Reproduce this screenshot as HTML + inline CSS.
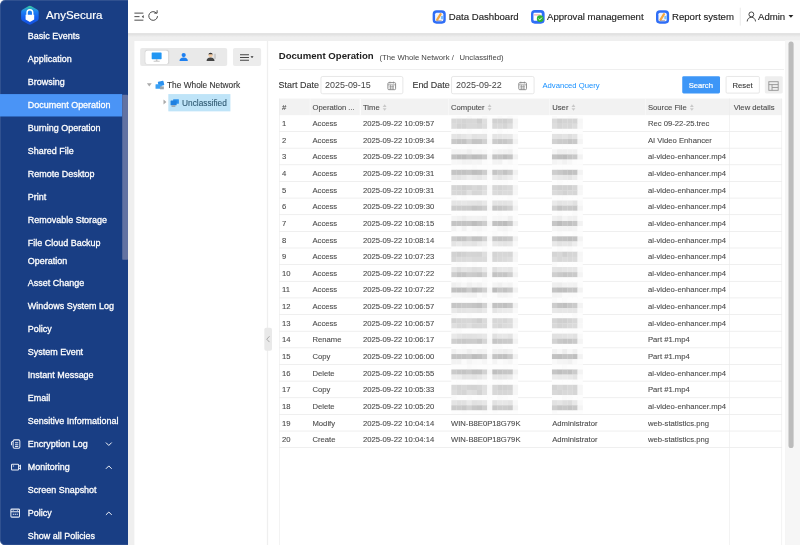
<!DOCTYPE html><html><head><meta charset="utf-8"><title>AnySecura</title><style>*{box-sizing:border-box;margin:0;padding:0}
html,body{width:800px;height:545px;overflow:hidden;background:#efefef;font-family:"Liberation Sans",sans-serif}
#app{position:absolute;left:0;top:0;width:1250px;height:852px;transform:scale(.64);transform-origin:0 0;background:linear-gradient(90deg,#fff 100px,#efefef 100px);overflow:hidden}
.side{position:absolute;left:0;top:0;width:199.6px;height:851.6px;background:#193e84;overflow:hidden;border-radius:8px 0 0 8px;box-shadow:inset 1.6px 0 0 rgba(255,255,255,.1),inset 0 1.6px 0 rgba(255,255,255,.1),inset 0 -1.6px 0 rgba(255,255,255,.1)}
.side svg{position:absolute;left:0;top:0}
.brand{-webkit-text-stroke:.3px #fff;position:absolute;left:72px;top:12px;font-size:18px;line-height:24px;color:#fff}
.mi{-webkit-text-stroke:.45px #fff;position:absolute;left:43.5px;height:36px;line-height:36px;font-size:14px;color:#fff;white-space:nowrap}
.act{position:absolute;left:0;width:191px;height:35.5px;background:#4a94f6}
.sscroll{position:absolute;left:191px;top:148.4px;width:8.5px;height:258px;background:#6272a2;border-radius:1.5px}
.top{position:absolute;left:200px;top:0;width:1050px;height:52px;background:#fff}
.top svg{position:absolute;left:0;top:0}
.tl{-webkit-text-stroke:.2px #222;position:absolute;top:14px;margin-left:-200px;font-size:15px;line-height:24px;color:#222;white-space:nowrap}
.tdiv{position:absolute;left:956px;top:12px;width:1px;height:28px;background:#ddd}
.topsh{position:absolute;left:200px;top:52px;width:1050px;height:6px;background:linear-gradient(#dcdcdc,#efefef)}
.lp{position:absolute;left:210px;top:64px;width:207px;height:800px;background:#fff}
.lp svg{position:absolute;left:0;top:0}
.seg{position:absolute;left:9px;top:11px;width:136px;height:28px;background:#e9e9e9;border-radius:3px}
.segon{position:absolute;left:7.5px;top:3.5px;width:36px;height:21px;background:#fff;border-radius:4px;box-shadow:0 0 2px rgba(0,0,0,.15)}
.seg2{position:absolute;left:154px;top:11px;width:44px;height:28px;background:#ececec;border-radius:3px}
.tsel{position:absolute;left:52.5px;top:82.8px;width:97px;height:27.2px;background:#bfe4f8}
.tn{-webkit-text-stroke:.15px #333;position:absolute;font-size:13px;line-height:24px;color:#333;white-space:nowrap}
.handle{z-index:5;position:absolute;left:413px;top:512px;width:12px;height:35.5px;background:#e9e9e9;border-radius:3px}
.handle svg{position:absolute;left:2px;top:11.7px}
.rp{position:absolute;left:419px;top:64px;width:808px;height:800px;background:#fff}
.rp svg{position:absolute;left:0;top:0}
.ttl{position:absolute;left:16.5px;top:11.3px;font-size:15px;font-weight:bold;line-height:24px;color:#222;white-space:nowrap}
.crumb{position:absolute;left:174px;top:13.5px;font-size:12px;line-height:24px;color:#444;white-space:nowrap}
.hr{position:absolute;left:17px;top:44px;width:789px;height:1px;background:#e6e6e6}
.lbl{-webkit-text-stroke:.15px #333;position:absolute;top:55.6px;font-size:14px;line-height:26px;color:#333;white-space:nowrap}
.inp{position:absolute;top:55px;width:129.5px;height:27.5px;border:1px solid #d9d9d9;border-radius:3px;background:#fff}
.inp span{position:absolute;left:6px;top:0;font-size:14px;line-height:25px;color:#444}
.adv{position:absolute;left:428.5px;top:56.5px;font-size:12px;line-height:26px;color:#1890ff;white-space:nowrap}
.btn{position:absolute;top:55.3px;height:26.5px;font-size:12px;line-height:29.4px;text-align:center;border-radius:2.2px}
.pri{left:646.5px;width:59px;background:#3d96f7;color:#fff;-webkit-text-stroke:.3px #fff}
.sec{left:715px;width:52.5px;background:#fff;border:1px solid #d9d9d9;color:#333;line-height:27.4px;-webkit-text-stroke:.15px #333}
.grid{left:776px;width:27.5px;background:#eee}
.tb{position:absolute;height:800px;font-size:12px;color:#4c4c4c;-webkit-text-stroke:.15px #4c4c4c}
.thr{position:absolute;left:0;top:0;width:100%;height:26px;background:#f2f2f2}
.th{position:absolute;top:0;height:26px;line-height:28.6px;padding-left:4.6px;white-space:nowrap}
.so{display:inline-block;position:relative;width:8px;height:12px;margin-left:4px;vertical-align:-2px}
.so:before,.so:after{content:"";position:absolute;left:.4px;border:3.6px solid transparent}
.so:before{top:-2.2px;border-bottom:4.2px solid #c8c8c8}
.so:after{top:7.2px;border-top:4.2px solid #c8c8c8}
.tr{position:absolute;left:0;width:100%;height:26px;border-bottom:1px solid #e6e6e6}
.td{position:absolute;top:0;height:26px;line-height:27.5px;padding-left:4.6px;white-space:nowrap}
.vl{position:absolute;top:0;width:1px;height:546px;background:#ececec}







.pscroll{position:absolute;left:1232px;top:65px;width:8.3px;height:634.5px;background:#bcbcbc;border-radius:4px}
.track{position:absolute;left:1227px;top:63px;width:23px;height:800px;background:#f6f6f6}
.mos{position:absolute;left:0;top:0}
.hs{position:absolute;top:0;width:1.2px;height:26px;background:#fbfbfb}
</style></head><body><div id="app">
<div class="side">
<div class="act" style="top:146.56px"></div>
<svg width="200" height="60" viewBox="0 0 200 60"><defs><linearGradient id="lg" x1="0" y1="0" x2="0" y2="1"><stop offset="0" stop-color="#38cc9c"/><stop offset=".28" stop-color="#1e84f2"/><stop offset=".6" stop-color="#1562f2"/><stop offset="1" stop-color="#1450dc"/></linearGradient></defs>
<path d="M44.3 9.8 a5 5 0 0 1 4.8 0 L58 14.8 a4.6 4.6 0 0 1 2.4 4 V29 a4.6 4.6 0 0 1 -2.4 4 L49.1 38 a5 5 0 0 1 -4.8 0 L35.4 33 a4.6 4.6 0 0 1 -2.4 -4 V18.8 a4.6 4.6 0 0 1 2.4 -4 Z" fill="url(#lg)"/>
<path d="M42.3 23.5 v-3.8 a4.4 4.4 0 0 1 8.8 0 V23.5" fill="none" stroke="#fff" stroke-width="2.3"/>
<path d="M40 23 h13.4 v7.6 l-6.7 3.8 l-6.7 -3.8 Z" fill="#fff"/></svg>

<div class="brand">AnySecura</div>
<div class="mi" style="top:38.25px">Basic Events</div>
<div class="mi" style="top:74.09px">Application</div>
<div class="mi" style="top:109.94px">Browsing</div>
<div class="mi" style="top:145.78px">Document Operation</div>
<div class="mi" style="top:181.62px">Burning Operation</div>
<div class="mi" style="top:217.47px">Shared File</div>
<div class="mi" style="top:253.31px">Remote Desktop</div>
<div class="mi" style="top:289.16px">Print</div>
<div class="mi" style="top:325.00px">Removable Storage</div>
<div class="mi" style="top:361.06px">File Cloud Backup</div>
<div class="mi" style="top:388.72px">Operation</div>
<div class="mi" style="top:423.88px">Asset Change</div>
<div class="mi" style="top:460.42px">Windows System Log</div>
<div class="mi" style="top:496.27px">Policy</div>
<div class="mi" style="top:532.11px">System Event</div>
<div class="mi" style="top:567.95px">Instant Message</div>
<div class="mi" style="top:603.80px">Email</div>
<div class="mi" style="top:639.64px">Sensitive Informational</div>
<div class="mi" style="top:675.48px">Encryption Log</div>
<div class="mi" style="top:711.33px">Monitoring</div>
<div class="mi" style="top:747.17px">Screen Snapshot</div>
<div class="mi" style="top:783.02px">Policy</div>
<div class="mi" style="top:818.86px">Show all Policies</div>
<svg width="200" height="852" viewBox="0 0 200 852" fill="none" stroke="#e8ecf5" stroke-width="1.6">
<g transform="translate(17,684.8)"><rect x="3.5" y="2.5" width="10.5" height="13" rx="2"/><path d="M3.5 5 H2.5 a1.6 1.6 0 0 0 -1.6 1.6 V11 M6.5 7 h5 M6.5 10 h5 M6.5 13 h5" /></g>
<g transform="translate(17,724)"><rect x="1" y="1.5" width="11" height="9" rx="1.2"/><path d="M12.5 4.5 l2.5 -1.5 v6 l-2.5 -1.5 M3 4 h2"/></g>
<g transform="translate(16,794)"><rect x="1" y="1.5" width="13.5" height="12.5" rx="1.5"/><path d="M1 5.5 h13.5 M4 9.5 h2 M7 9.5 h2 M10 9.5 h2 M4 3.5 h1 M10.5 3.5 h1" /></g>
<path d="M165.5 691.5 l4.5 4.5 l4.5 -4.5 M165.5 732.5 l4.5 -4.5 l4.5 4.5 M165.5 804.5 l4.5 -4.5 l4.5 4.5" stroke="#fff" stroke-width="1.5"/>
</svg>

<div class="sscroll"></div>
</div>
<div class="top">
<svg width="1050" height="52" viewBox="200 0 1050 52">
<g fill="none" stroke="#444" stroke-width="1.5"><path d="M210 20.5 h14 M210 26 h8 M210 31.5 h14"/><path d="M224.5 23.5 l-3 2.5 l3 2.5 z" fill="#444" stroke="none"/>
<path d="M244.5 20.6 a6.8 6.8 0 1 0 1.6 4.6" /><path d="M241 20.5 h4.5 v-4.5" /></g>
<g><rect x="676" y="16" width="20.5" height="21" rx="6" fill="#2f6ef6"/><rect x="679.8" y="19.8" width="12.9" height="13.4" rx="2.5" fill="#f1f4fd"/><path d="M683 31 L688.5 22" stroke="#f4a640" stroke-width="3.4" stroke-linecap="round" fill="none"/><rect x="689" y="25" width="3.4" height="5" fill="#7cc0fa"/><path d="M682 32.2 h8" stroke="#a89a9a" stroke-width="1.2"/></g>
<g><rect x="829.7" y="15.8" width="21.3" height="21.2" rx="6" fill="#2f6ef6"/><rect x="833.5" y="20" width="13" height="12.5" rx="1.5" fill="#fff"/><path d="M834.5 23.3 h10" stroke="#e88" stroke-width="1.3"/><circle cx="844" cy="29.2" r="5.2" fill="#2fb42f"/><path d="M841.3 29.2 l2 2 l3.4 -3.6" stroke="#fff" stroke-width="1.5" fill="none"/></g>
<g><rect x="1025" y="16" width="20.5" height="21" rx="6" fill="#2f6ef6"/><rect x="1028.8" y="19.8" width="12.9" height="13.4" rx="2.5" fill="#f1f4fd"/><path d="M1032 31 L1037.5 22" stroke="#f4a640" stroke-width="3.4" stroke-linecap="round" fill="none"/><rect x="1038" y="25" width="3.4" height="5" fill="#7cc0fa"/><path d="M1031 32.2 h8" stroke="#a89a9a" stroke-width="1.2"/></g>
<g fill="none" stroke="#333" stroke-width="1.4"><circle cx="1174" cy="22.5" r="3.8"/><path d="M1167.5 33.5 a6.5 6.5 0 0 1 13 0"/></g>
<path d="M1232 23.6 h7.6 l-3.8 4.3 z" fill="#222"/>
</svg>

<span class="tl" style="left:701.25px">Data Dashboard</span>
<span class="tl" style="left:854.69px">Approval management</span>
<span class="tl" style="left:1050.00px">Report system</span>
<span class="tl" style="left:1184.38px">Admin</span>
<div class="tdiv"></div>
</div><div class="topsh"></div>
<div class="lp">
<div class="seg"><div class="segon"></div></div><div class="seg2"></div>
<div class="tsel"></div>
<svg width="206" height="200" viewBox="210 64 206 200">
<g><rect x="237" y="82" width="15.5" height="10.5" rx="1" fill="#2196f3"/><rect x="243.5" y="92.5" width="2.5" height="2.5" fill="#bbb"/><rect x="240" y="95" width="9.5" height="1.3" fill="#bbb"/></g>
<g fill="#1e80f0"><circle cx="287" cy="86" r="3.3"/><path d="M280.5 95.5 a6.5 5.5 0 0 1 13 0 z"/></g>
<g><circle cx="329" cy="86.3" r="3.2" fill="#f0c8a0"/><path d="M325.6 86 a3.4 3.6 0 0 1 6.8 0 l-1 -1.2 h-4.8 z" fill="#333"/><path d="M322.8 95.5 a6.2 5.5 0 0 1 12.4 0 z" fill="#444"/><rect x="334" y="84" width="3.5" height="8" fill="#ccc"/></g>
<g stroke="#444" stroke-width="1.6"><path d="M375 85.5 h14 M375 89.7 h14 M375 94 h14"/></g><path d="M391.5 88 h4.6 l-2.3 3 z" fill="#333"/>
<path d="M229.5 130 h7.5 l-3.75 5 z" fill="#aaa"/>
<path d="M255.5 155.5 l4.5 3.8 l-4.5 3.8 z" fill="#aaa"/>
<g id="net"><rect x="247" y="127" width="9" height="7" rx=".8" fill="#2a90ee" transform="rotate(-12 251 130)"/><rect x="243" y="131.5" width="9.5" height="7" rx=".8" fill="#3aa0f4"/><rect x="250" y="135" width="6" height="4.5" fill="#9aa4ad"/></g>
<g><rect x="270.5" y="155" width="9" height="7" rx=".8" fill="#2a90ee"/><rect x="266.5" y="157" width="9.5" height="7.5" rx=".8" fill="#1e80e0"/><rect x="268" y="164.5" width="6" height="2.5" fill="#9aa4ad"/></g>
</svg>

<div class="tn" style="left:50.94px;top:56.81px">The Whole Network</div>
<div class="tn" style="left:74.38px;top:85.25px;color:#2e5871;-webkit-text-stroke-color:#2e5871">Unclassified</div>
</div>
<div class="handle"><svg width="8" height="12" viewBox="0 0 8 12"><path d="M6 1.5 L1.8 6 L6 10.5" fill="none" stroke="#999" stroke-width="1.3"/></svg></div>
<div class="rp">
<div class="ttl">Document Operation</div><div class="crumb">(The Whole Network&nbsp;/&nbsp; <span style="margin-left:2.3px">Unclassified)</span></div>
<div class="hr"></div>
<div class="lbl" style="left:16.31px">Start Date</div>
<div class="inp" style="left:81.78px"><span>2025-09-15</span></div>
<div class="lbl" style="left:225.38px">End Date</div>
<div class="inp" style="left:286.47px"><span>2025-09-22</span></div>
<div class="adv">Advanced Query</div>
<div class="btn pri">Search</div><div class="btn sec">Reset</div><div class="btn grid"></div>
<svg width="807" height="100" viewBox="419 64 807 100" fill="none" stroke="#858585" stroke-width="1.45">
<g transform="translate(605.5,127.5)"><rect x=".6" y="1.6" width="12" height="11" rx="1.5"/><path d="M.6 5 h12 M3.8 0 v3 M9.4 0 v3 M3 7.5 h7 M3 10 h7 M4.6 5 v7.6 M8.6 5 v7.6" stroke-width="1"/></g>
<g transform="translate(810,127.5)"><rect x=".6" y="1.6" width="12" height="11" rx="1.5"/><path d="M.6 5 h12 M3.8 0 v3 M9.4 0 v3 M3 7.5 h7 M3 10 h7 M4.6 5 v7.6 M8.6 5 v7.6" stroke-width="1"/></g>
<g transform="translate(1200.6,127)" stroke="#909090" stroke-width="1.35"><rect x=".7" y=".7" width="14.6" height="13.4"/><path d="M.7 5.2 h14.6 M5.7 5.2 v8.9 M5.7 9.7 h9.6"/></g>
</svg>

<div class="tb" style="left:16.94px;top:90.06px;width:785.94px">
<div class="thr">
<div class="th" style="left:0.00px;width:47.66px">#</div>
<div class="th" style="left:47.66px;width:78.91px">Operation ...</div>
<div class="th" style="left:126.56px;width:137.50px">Time<i class="so"></i></div>
<div class="th" style="left:264.06px;width:158.28px">Computer<i class="so"></i></div>
<div class="th" style="left:422.34px;width:149.53px">User<i class="so"></i></div>
<div class="th" style="left:571.88px;width:131.56px">Source File<i class="so"></i></div>
<div class="th" style="left:705.84px;width:82.50px">View details</div>
</div>
<div class="tr" style="top:26.00px">
<div class="td" style="left:0.00px;width:47.66px">1</div>
<div class="td" style="left:47.66px;width:78.91px">Access</div>
<div class="td" style="left:126.56px;width:137.50px">2025-09-22 10:09:57</div>
<div class="td" style="left:264.06px;width:158.28px"></div>
<div class="td" style="left:422.34px;width:149.53px"></div>
<div class="td" style="left:571.88px;width:131.56px">Rec 09-22-25.trec</div>
<div class="td" style="left:703.44px;width:82.50px"></div>
</div>
<div class="tr" style="top:52.00px">
<div class="td" style="left:0.00px;width:47.66px">2</div>
<div class="td" style="left:47.66px;width:78.91px">Access</div>
<div class="td" style="left:126.56px;width:137.50px">2025-09-22 10:09:34</div>
<div class="td" style="left:264.06px;width:158.28px"></div>
<div class="td" style="left:422.34px;width:149.53px"></div>
<div class="td" style="left:571.88px;width:131.56px">AI Video Enhancer</div>
<div class="td" style="left:703.44px;width:82.50px"></div>
</div>
<div class="tr" style="top:78.00px">
<div class="td" style="left:0.00px;width:47.66px">3</div>
<div class="td" style="left:47.66px;width:78.91px">Access</div>
<div class="td" style="left:126.56px;width:137.50px">2025-09-22 10:09:34</div>
<div class="td" style="left:264.06px;width:158.28px"></div>
<div class="td" style="left:422.34px;width:149.53px"></div>
<div class="td" style="left:571.88px;width:131.56px">ai-video-enhancer.mp4</div>
<div class="td" style="left:703.44px;width:82.50px"></div>
</div>
<div class="tr" style="top:104.00px">
<div class="td" style="left:0.00px;width:47.66px">4</div>
<div class="td" style="left:47.66px;width:78.91px">Access</div>
<div class="td" style="left:126.56px;width:137.50px">2025-09-22 10:09:31</div>
<div class="td" style="left:264.06px;width:158.28px"></div>
<div class="td" style="left:422.34px;width:149.53px"></div>
<div class="td" style="left:571.88px;width:131.56px">ai-video-enhancer.mp4</div>
<div class="td" style="left:703.44px;width:82.50px"></div>
</div>
<div class="tr" style="top:130.00px">
<div class="td" style="left:0.00px;width:47.66px">5</div>
<div class="td" style="left:47.66px;width:78.91px">Access</div>
<div class="td" style="left:126.56px;width:137.50px">2025-09-22 10:09:31</div>
<div class="td" style="left:264.06px;width:158.28px"></div>
<div class="td" style="left:422.34px;width:149.53px"></div>
<div class="td" style="left:571.88px;width:131.56px">ai-video-enhancer.mp4</div>
<div class="td" style="left:703.44px;width:82.50px"></div>
</div>
<div class="tr" style="top:156.00px">
<div class="td" style="left:0.00px;width:47.66px">6</div>
<div class="td" style="left:47.66px;width:78.91px">Access</div>
<div class="td" style="left:126.56px;width:137.50px">2025-09-22 10:09:30</div>
<div class="td" style="left:264.06px;width:158.28px"></div>
<div class="td" style="left:422.34px;width:149.53px"></div>
<div class="td" style="left:571.88px;width:131.56px">ai-video-enhancer.mp4</div>
<div class="td" style="left:703.44px;width:82.50px"></div>
</div>
<div class="tr" style="top:182.00px">
<div class="td" style="left:0.00px;width:47.66px">7</div>
<div class="td" style="left:47.66px;width:78.91px">Access</div>
<div class="td" style="left:126.56px;width:137.50px">2025-09-22 10:08:15</div>
<div class="td" style="left:264.06px;width:158.28px"></div>
<div class="td" style="left:422.34px;width:149.53px"></div>
<div class="td" style="left:571.88px;width:131.56px">ai-video-enhancer.mp4</div>
<div class="td" style="left:703.44px;width:82.50px"></div>
</div>
<div class="tr" style="top:208.00px">
<div class="td" style="left:0.00px;width:47.66px">8</div>
<div class="td" style="left:47.66px;width:78.91px">Access</div>
<div class="td" style="left:126.56px;width:137.50px">2025-09-22 10:08:14</div>
<div class="td" style="left:264.06px;width:158.28px"></div>
<div class="td" style="left:422.34px;width:149.53px"></div>
<div class="td" style="left:571.88px;width:131.56px">ai-video-enhancer.mp4</div>
<div class="td" style="left:703.44px;width:82.50px"></div>
</div>
<div class="tr" style="top:234.00px">
<div class="td" style="left:0.00px;width:47.66px">9</div>
<div class="td" style="left:47.66px;width:78.91px">Access</div>
<div class="td" style="left:126.56px;width:137.50px">2025-09-22 10:07:23</div>
<div class="td" style="left:264.06px;width:158.28px"></div>
<div class="td" style="left:422.34px;width:149.53px"></div>
<div class="td" style="left:571.88px;width:131.56px">ai-video-enhancer.mp4</div>
<div class="td" style="left:703.44px;width:82.50px"></div>
</div>
<div class="tr" style="top:260.00px">
<div class="td" style="left:0.00px;width:47.66px">10</div>
<div class="td" style="left:47.66px;width:78.91px">Access</div>
<div class="td" style="left:126.56px;width:137.50px">2025-09-22 10:07:22</div>
<div class="td" style="left:264.06px;width:158.28px"></div>
<div class="td" style="left:422.34px;width:149.53px"></div>
<div class="td" style="left:571.88px;width:131.56px">ai-video-enhancer.mp4</div>
<div class="td" style="left:703.44px;width:82.50px"></div>
</div>
<div class="tr" style="top:286.00px">
<div class="td" style="left:0.00px;width:47.66px">11</div>
<div class="td" style="left:47.66px;width:78.91px">Access</div>
<div class="td" style="left:126.56px;width:137.50px">2025-09-22 10:07:22</div>
<div class="td" style="left:264.06px;width:158.28px"></div>
<div class="td" style="left:422.34px;width:149.53px"></div>
<div class="td" style="left:571.88px;width:131.56px">ai-video-enhancer.mp4</div>
<div class="td" style="left:703.44px;width:82.50px"></div>
</div>
<div class="tr" style="top:312.00px">
<div class="td" style="left:0.00px;width:47.66px">12</div>
<div class="td" style="left:47.66px;width:78.91px">Access</div>
<div class="td" style="left:126.56px;width:137.50px">2025-09-22 10:06:57</div>
<div class="td" style="left:264.06px;width:158.28px"></div>
<div class="td" style="left:422.34px;width:149.53px"></div>
<div class="td" style="left:571.88px;width:131.56px">ai-video-enhancer.mp4</div>
<div class="td" style="left:703.44px;width:82.50px"></div>
</div>
<div class="tr" style="top:338.00px">
<div class="td" style="left:0.00px;width:47.66px">13</div>
<div class="td" style="left:47.66px;width:78.91px">Access</div>
<div class="td" style="left:126.56px;width:137.50px">2025-09-22 10:06:57</div>
<div class="td" style="left:264.06px;width:158.28px"></div>
<div class="td" style="left:422.34px;width:149.53px"></div>
<div class="td" style="left:571.88px;width:131.56px">ai-video-enhancer.mp4</div>
<div class="td" style="left:703.44px;width:82.50px"></div>
</div>
<div class="tr" style="top:364.00px">
<div class="td" style="left:0.00px;width:47.66px">14</div>
<div class="td" style="left:47.66px;width:78.91px">Rename</div>
<div class="td" style="left:126.56px;width:137.50px">2025-09-22 10:06:17</div>
<div class="td" style="left:264.06px;width:158.28px"></div>
<div class="td" style="left:422.34px;width:149.53px"></div>
<div class="td" style="left:571.88px;width:131.56px">Part #1.mp4</div>
<div class="td" style="left:703.44px;width:82.50px"></div>
</div>
<div class="tr" style="top:390.00px">
<div class="td" style="left:0.00px;width:47.66px">15</div>
<div class="td" style="left:47.66px;width:78.91px">Copy</div>
<div class="td" style="left:126.56px;width:137.50px">2025-09-22 10:06:00</div>
<div class="td" style="left:264.06px;width:158.28px"></div>
<div class="td" style="left:422.34px;width:149.53px"></div>
<div class="td" style="left:571.88px;width:131.56px">Part #1.mp4</div>
<div class="td" style="left:703.44px;width:82.50px"></div>
</div>
<div class="tr" style="top:416.00px">
<div class="td" style="left:0.00px;width:47.66px">16</div>
<div class="td" style="left:47.66px;width:78.91px">Delete</div>
<div class="td" style="left:126.56px;width:137.50px">2025-09-22 10:05:55</div>
<div class="td" style="left:264.06px;width:158.28px"></div>
<div class="td" style="left:422.34px;width:149.53px"></div>
<div class="td" style="left:571.88px;width:131.56px">ai-video-enhancer.mp4</div>
<div class="td" style="left:703.44px;width:82.50px"></div>
</div>
<div class="tr" style="top:442.00px">
<div class="td" style="left:0.00px;width:47.66px">17</div>
<div class="td" style="left:47.66px;width:78.91px">Copy</div>
<div class="td" style="left:126.56px;width:137.50px">2025-09-22 10:05:33</div>
<div class="td" style="left:264.06px;width:158.28px"></div>
<div class="td" style="left:422.34px;width:149.53px"></div>
<div class="td" style="left:571.88px;width:131.56px">Part #1.mp4</div>
<div class="td" style="left:703.44px;width:82.50px"></div>
</div>
<div class="tr" style="top:468.00px">
<div class="td" style="left:0.00px;width:47.66px">18</div>
<div class="td" style="left:47.66px;width:78.91px">Delete</div>
<div class="td" style="left:126.56px;width:137.50px">2025-09-22 10:05:20</div>
<div class="td" style="left:264.06px;width:158.28px"></div>
<div class="td" style="left:422.34px;width:149.53px"></div>
<div class="td" style="left:571.88px;width:131.56px">ai-video-enhancer.mp4</div>
<div class="td" style="left:703.44px;width:82.50px"></div>
</div>
<div class="tr" style="top:494.00px">
<div class="td" style="left:0.00px;width:47.66px">19</div>
<div class="td" style="left:47.66px;width:78.91px">Modify</div>
<div class="td" style="left:126.56px;width:137.50px">2025-09-22 10:04:14</div>
<div class="td" style="left:264.06px;width:158.28px">WIN-B8E0P18G79K</div>
<div class="td" style="left:422.34px;width:149.53px">Administrator</div>
<div class="td" style="left:571.88px;width:131.56px">web-statistics.png</div>
<div class="td" style="left:703.44px;width:82.50px"></div>
</div>
<div class="tr" style="top:520.00px">
<div class="td" style="left:0.00px;width:47.66px">20</div>
<div class="td" style="left:47.66px;width:78.91px">Create</div>
<div class="td" style="left:126.56px;width:137.50px">2025-09-22 10:04:14</div>
<div class="td" style="left:264.06px;width:158.28px">WIN-B8E0P18G79K</div>
<div class="td" style="left:422.34px;width:149.53px">Administrator</div>
<div class="td" style="left:571.88px;width:131.56px">web-statistics.png</div>
<div class="td" style="left:703.44px;width:82.50px"></div>
</div>
<div class="vl" style="left:0.00px;height:800px"></div>
<div class="vl" style="left:703.44px;height:800px"></div>
<div class="vl" style="left:784.94px;height:800px"></div>
<div class="hs" style="left:47.66px"></div>
<div class="hs" style="left:126.56px"></div>
<div class="hs" style="left:264.06px"></div>
<div class="hs" style="left:422.34px"></div>
<div class="hs" style="left:571.88px"></div>
<svg class="mos" width="785.9" height="546" viewBox="0 0 785.9 546"><defs><filter id="bl" x="-5%" y="-5%" width="110%" height="110%"><feGaussianBlur stdDeviation="0.7"/></filter></defs><g filter="url(#bl)"><rect x="269.22" y="27.25" width="8.30" height="4.30" fill="rgb(253,253,253)"/><rect x="277.22" y="27.25" width="8.30" height="4.30" fill="rgb(251,251,251)"/><rect x="285.22" y="27.25" width="8.30" height="4.30" fill="rgb(253,253,253)"/><rect x="293.22" y="27.25" width="8.30" height="4.30" fill="rgb(250,250,250)"/><rect x="301.22" y="27.25" width="8.30" height="4.30" fill="rgb(253,253,253)"/><rect x="309.22" y="27.25" width="8.30" height="4.30" fill="rgb(253,253,253)"/><rect x="317.22" y="27.25" width="8.30" height="4.30" fill="rgb(250,250,250)"/><rect x="325.22" y="27.25" width="8.30" height="4.30" fill="rgb(253,253,253)"/><rect x="333.22" y="27.25" width="8.30" height="4.30" fill="rgb(253,253,253)"/><rect x="341.22" y="27.25" width="8.30" height="4.30" fill="rgb(250,250,250)"/><rect x="349.22" y="27.25" width="8.30" height="4.30" fill="rgb(253,253,253)"/><rect x="357.22" y="27.25" width="8.30" height="4.30" fill="rgb(250,250,250)"/><rect x="365.22" y="27.25" width="8.30" height="4.30" fill="rgb(253,253,253)"/><rect x="426.41" y="27.25" width="8.30" height="4.30" fill="rgb(250,250,250)"/><rect x="434.41" y="27.25" width="8.30" height="4.30" fill="rgb(253,253,253)"/><rect x="442.41" y="27.25" width="8.30" height="4.30" fill="rgb(253,253,253)"/><rect x="450.41" y="27.25" width="8.30" height="4.30" fill="rgb(251,251,251)"/><rect x="458.41" y="27.25" width="8.30" height="4.30" fill="rgb(252,252,252)"/><rect x="466.41" y="27.25" width="8.30" height="4.30" fill="rgb(253,253,253)"/><rect x="269.22" y="31.25" width="8.30" height="8.30" fill="rgb(216,216,216)"/><rect x="277.22" y="31.25" width="8.30" height="8.30" fill="rgb(215,215,215)"/><rect x="285.22" y="31.25" width="8.30" height="8.30" fill="rgb(212,212,212)"/><rect x="293.22" y="31.25" width="8.30" height="8.30" fill="rgb(215,215,215)"/><rect x="301.22" y="31.25" width="8.30" height="8.30" fill="rgb(216,216,216)"/><rect x="309.22" y="31.25" width="8.30" height="8.30" fill="rgb(206,206,206)"/><rect x="317.22" y="31.25" width="8.30" height="8.30" fill="rgb(223,223,223)"/><rect x="325.22" y="31.25" width="8.30" height="8.30" fill="rgb(249,249,249)"/><rect x="333.22" y="31.25" width="8.30" height="8.30" fill="rgb(209,209,209)"/><rect x="341.22" y="31.25" width="8.30" height="8.30" fill="rgb(209,209,209)"/><rect x="349.22" y="31.25" width="8.30" height="8.30" fill="rgb(207,207,207)"/><rect x="357.22" y="31.25" width="8.30" height="8.30" fill="rgb(213,213,213)"/><rect x="365.22" y="31.25" width="8.30" height="8.30" fill="rgb(245,245,245)"/><rect x="426.41" y="31.25" width="8.30" height="8.30" fill="rgb(218,218,218)"/><rect x="434.41" y="31.25" width="8.30" height="8.30" fill="rgb(208,208,208)"/><rect x="442.41" y="31.25" width="8.30" height="8.30" fill="rgb(212,212,212)"/><rect x="450.41" y="31.25" width="8.30" height="8.30" fill="rgb(212,212,212)"/><rect x="458.41" y="31.25" width="8.30" height="8.30" fill="rgb(212,212,212)"/><rect x="466.41" y="31.25" width="8.30" height="8.30" fill="rgb(246,246,246)"/><rect x="269.22" y="39.25" width="8.30" height="8.30" fill="rgb(219,219,219)"/><rect x="277.22" y="39.25" width="8.30" height="8.30" fill="rgb(211,211,211)"/><rect x="285.22" y="39.25" width="8.30" height="8.30" fill="rgb(211,211,211)"/><rect x="293.22" y="39.25" width="8.30" height="8.30" fill="rgb(217,217,217)"/><rect x="301.22" y="39.25" width="8.30" height="8.30" fill="rgb(217,217,217)"/><rect x="309.22" y="39.25" width="8.30" height="8.30" fill="rgb(214,214,214)"/><rect x="317.22" y="39.25" width="8.30" height="8.30" fill="rgb(221,221,221)"/><rect x="325.22" y="39.25" width="8.30" height="8.30" fill="rgb(250,250,250)"/><rect x="333.22" y="39.25" width="8.30" height="8.30" fill="rgb(216,216,216)"/><rect x="341.22" y="39.25" width="8.30" height="8.30" fill="rgb(217,217,217)"/><rect x="349.22" y="39.25" width="8.30" height="8.30" fill="rgb(213,213,213)"/><rect x="357.22" y="39.25" width="8.30" height="8.30" fill="rgb(222,222,222)"/><rect x="365.22" y="39.25" width="8.30" height="8.30" fill="rgb(246,246,246)"/><rect x="426.41" y="39.25" width="8.30" height="8.30" fill="rgb(221,221,221)"/><rect x="434.41" y="39.25" width="8.30" height="8.30" fill="rgb(213,213,213)"/><rect x="442.41" y="39.25" width="8.30" height="8.30" fill="rgb(216,216,216)"/><rect x="450.41" y="39.25" width="8.30" height="8.30" fill="rgb(215,215,215)"/><rect x="458.41" y="39.25" width="8.30" height="8.30" fill="rgb(221,221,221)"/><rect x="466.41" y="39.25" width="8.30" height="8.30" fill="rgb(247,247,247)"/><rect x="269.22" y="47.25" width="8.30" height="8.30" fill="rgb(253,253,253)"/><rect x="277.22" y="47.25" width="8.30" height="8.30" fill="rgb(252,252,252)"/><rect x="285.22" y="47.25" width="8.30" height="8.30" fill="rgb(253,253,253)"/><rect x="293.22" y="47.25" width="8.30" height="8.30" fill="rgb(251,251,251)"/><rect x="301.22" y="47.25" width="8.30" height="8.30" fill="rgb(253,253,253)"/><rect x="309.22" y="47.25" width="8.30" height="8.30" fill="rgb(253,253,253)"/><rect x="317.22" y="47.25" width="8.30" height="8.30" fill="rgb(251,251,251)"/><rect x="325.22" y="47.25" width="8.30" height="8.30" fill="rgb(253,253,253)"/><rect x="333.22" y="47.25" width="8.30" height="8.30" fill="rgb(253,253,253)"/><rect x="341.22" y="47.25" width="8.30" height="8.30" fill="rgb(250,250,250)"/><rect x="349.22" y="47.25" width="8.30" height="8.30" fill="rgb(253,253,253)"/><rect x="357.22" y="47.25" width="8.30" height="8.30" fill="rgb(253,253,253)"/><rect x="365.22" y="47.25" width="8.30" height="8.30" fill="rgb(253,253,253)"/><rect x="426.41" y="47.25" width="8.30" height="8.30" fill="rgb(253,253,253)"/><rect x="434.41" y="47.25" width="8.30" height="8.30" fill="rgb(253,253,253)"/><rect x="442.41" y="47.25" width="8.30" height="8.30" fill="rgb(253,253,253)"/><rect x="450.41" y="47.25" width="8.30" height="8.30" fill="rgb(253,253,253)"/><rect x="458.41" y="47.25" width="8.30" height="8.30" fill="rgb(253,253,253)"/><rect x="466.41" y="47.25" width="8.30" height="8.30" fill="rgb(253,253,253)"/><rect x="269.22" y="55.25" width="8.30" height="8.30" fill="rgb(229,229,229)"/><rect x="277.22" y="55.25" width="8.30" height="8.30" fill="rgb(226,226,226)"/><rect x="285.22" y="55.25" width="8.30" height="8.30" fill="rgb(230,230,230)"/><rect x="293.22" y="55.25" width="8.30" height="8.30" fill="rgb(234,234,234)"/><rect x="301.22" y="55.25" width="8.30" height="8.30" fill="rgb(226,226,226)"/><rect x="309.22" y="55.25" width="8.30" height="8.30" fill="rgb(228,228,228)"/><rect x="317.22" y="55.25" width="8.30" height="8.30" fill="rgb(228,228,228)"/><rect x="325.22" y="55.25" width="8.30" height="8.30" fill="rgb(251,251,251)"/><rect x="333.22" y="55.25" width="8.30" height="8.30" fill="rgb(228,228,228)"/><rect x="341.22" y="55.25" width="8.30" height="8.30" fill="rgb(229,229,229)"/><rect x="349.22" y="55.25" width="8.30" height="8.30" fill="rgb(231,231,231)"/><rect x="357.22" y="55.25" width="8.30" height="8.30" fill="rgb(232,232,232)"/><rect x="365.22" y="55.25" width="8.30" height="8.30" fill="rgb(248,248,248)"/><rect x="426.41" y="55.25" width="8.30" height="8.30" fill="rgb(227,227,227)"/><rect x="434.41" y="55.25" width="8.30" height="8.30" fill="rgb(225,225,225)"/><rect x="442.41" y="55.25" width="8.30" height="8.30" fill="rgb(228,228,228)"/><rect x="450.41" y="55.25" width="8.30" height="8.30" fill="rgb(222,222,222)"/><rect x="458.41" y="55.25" width="8.30" height="8.30" fill="rgb(227,227,227)"/><rect x="466.41" y="55.25" width="8.30" height="8.30" fill="rgb(249,249,249)"/><rect x="269.22" y="63.25" width="8.30" height="8.30" fill="rgb(201,201,201)"/><rect x="277.22" y="63.25" width="8.30" height="8.30" fill="rgb(196,196,196)"/><rect x="285.22" y="63.25" width="8.30" height="8.30" fill="rgb(195,195,195)"/><rect x="293.22" y="63.25" width="8.30" height="8.30" fill="rgb(209,209,209)"/><rect x="301.22" y="63.25" width="8.30" height="8.30" fill="rgb(196,196,196)"/><rect x="309.22" y="63.25" width="8.30" height="8.30" fill="rgb(197,197,197)"/><rect x="317.22" y="63.25" width="8.30" height="8.30" fill="rgb(209,209,209)"/><rect x="325.22" y="63.25" width="8.30" height="8.30" fill="rgb(248,248,248)"/><rect x="333.22" y="63.25" width="8.30" height="8.30" fill="rgb(203,203,203)"/><rect x="341.22" y="63.25" width="8.30" height="8.30" fill="rgb(198,198,198)"/><rect x="349.22" y="63.25" width="8.30" height="8.30" fill="rgb(199,199,199)"/><rect x="357.22" y="63.25" width="8.30" height="8.30" fill="rgb(206,206,206)"/><rect x="365.22" y="63.25" width="8.30" height="8.30" fill="rgb(242,242,242)"/><rect x="426.41" y="63.25" width="8.30" height="8.30" fill="rgb(209,209,209)"/><rect x="434.41" y="63.25" width="8.30" height="8.30" fill="rgb(203,203,203)"/><rect x="442.41" y="63.25" width="8.30" height="8.30" fill="rgb(203,203,203)"/><rect x="450.41" y="63.25" width="8.30" height="8.30" fill="rgb(197,197,197)"/><rect x="458.41" y="63.25" width="8.30" height="8.30" fill="rgb(201,201,201)"/><rect x="466.41" y="63.25" width="8.30" height="8.30" fill="rgb(244,244,244)"/><rect x="269.22" y="71.25" width="8.30" height="8.30" fill="rgb(253,253,253)"/><rect x="277.22" y="71.25" width="8.30" height="8.30" fill="rgb(253,253,253)"/><rect x="285.22" y="71.25" width="8.30" height="8.30" fill="rgb(253,253,253)"/><rect x="293.22" y="71.25" width="8.30" height="8.30" fill="rgb(251,251,251)"/><rect x="301.22" y="71.25" width="8.30" height="8.30" fill="rgb(251,251,251)"/><rect x="309.22" y="71.25" width="8.30" height="8.30" fill="rgb(252,252,252)"/><rect x="317.22" y="71.25" width="8.30" height="8.30" fill="rgb(252,252,252)"/><rect x="325.22" y="71.25" width="8.30" height="8.30" fill="rgb(253,253,253)"/><rect x="333.22" y="71.25" width="8.30" height="8.30" fill="rgb(253,253,253)"/><rect x="341.22" y="71.25" width="8.30" height="8.30" fill="rgb(253,253,253)"/><rect x="349.22" y="71.25" width="8.30" height="8.30" fill="rgb(252,252,252)"/><rect x="357.22" y="71.25" width="8.30" height="8.30" fill="rgb(250,250,250)"/><rect x="365.22" y="71.25" width="8.30" height="8.30" fill="rgb(253,253,253)"/><rect x="426.41" y="71.25" width="8.30" height="8.30" fill="rgb(253,253,253)"/><rect x="434.41" y="71.25" width="8.30" height="8.30" fill="rgb(253,253,253)"/><rect x="442.41" y="71.25" width="8.30" height="8.30" fill="rgb(253,253,253)"/><rect x="450.41" y="71.25" width="8.30" height="8.30" fill="rgb(253,253,253)"/><rect x="458.41" y="71.25" width="8.30" height="8.30" fill="rgb(253,253,253)"/><rect x="466.41" y="71.25" width="8.30" height="8.30" fill="rgb(253,253,253)"/><rect x="269.22" y="79.25" width="8.30" height="8.30" fill="rgb(243,243,243)"/><rect x="277.22" y="79.25" width="8.30" height="8.30" fill="rgb(243,243,243)"/><rect x="285.22" y="79.25" width="8.30" height="8.30" fill="rgb(244,244,244)"/><rect x="293.22" y="79.25" width="8.30" height="8.30" fill="rgb(239,239,239)"/><rect x="301.22" y="79.25" width="8.30" height="8.30" fill="rgb(246,246,246)"/><rect x="309.22" y="79.25" width="8.30" height="8.30" fill="rgb(245,245,245)"/><rect x="317.22" y="79.25" width="8.30" height="8.30" fill="rgb(248,248,248)"/><rect x="325.22" y="79.25" width="8.30" height="8.30" fill="rgb(253,253,253)"/><rect x="333.22" y="79.25" width="8.30" height="8.30" fill="rgb(245,245,245)"/><rect x="341.22" y="79.25" width="8.30" height="8.30" fill="rgb(242,242,242)"/><rect x="349.22" y="79.25" width="8.30" height="8.30" fill="rgb(241,241,241)"/><rect x="357.22" y="79.25" width="8.30" height="8.30" fill="rgb(239,239,239)"/><rect x="365.22" y="79.25" width="8.30" height="8.30" fill="rgb(252,252,252)"/><rect x="426.41" y="79.25" width="8.30" height="8.30" fill="rgb(245,245,245)"/><rect x="434.41" y="79.25" width="8.30" height="8.30" fill="rgb(238,238,238)"/><rect x="442.41" y="79.25" width="8.30" height="8.30" fill="rgb(238,238,238)"/><rect x="450.41" y="79.25" width="8.30" height="8.30" fill="rgb(239,239,239)"/><rect x="458.41" y="79.25" width="8.30" height="8.30" fill="rgb(239,239,239)"/><rect x="466.41" y="79.25" width="8.30" height="8.30" fill="rgb(252,252,252)"/><rect x="269.22" y="87.25" width="8.30" height="8.30" fill="rgb(195,195,195)"/><rect x="277.22" y="87.25" width="8.30" height="8.30" fill="rgb(188,188,188)"/><rect x="285.22" y="87.25" width="8.30" height="8.30" fill="rgb(187,187,187)"/><rect x="293.22" y="87.25" width="8.30" height="8.30" fill="rgb(196,196,196)"/><rect x="301.22" y="87.25" width="8.30" height="8.30" fill="rgb(188,188,188)"/><rect x="309.22" y="87.25" width="8.30" height="8.30" fill="rgb(191,191,191)"/><rect x="317.22" y="87.25" width="8.30" height="8.30" fill="rgb(200,200,200)"/><rect x="325.22" y="87.25" width="8.30" height="8.30" fill="rgb(247,247,247)"/><rect x="333.22" y="87.25" width="8.30" height="8.30" fill="rgb(196,196,196)"/><rect x="341.22" y="87.25" width="8.30" height="8.30" fill="rgb(196,196,196)"/><rect x="349.22" y="87.25" width="8.30" height="8.30" fill="rgb(189,189,189)"/><rect x="357.22" y="87.25" width="8.30" height="8.30" fill="rgb(196,196,196)"/><rect x="365.22" y="87.25" width="8.30" height="8.30" fill="rgb(241,241,241)"/><rect x="426.41" y="87.25" width="8.30" height="8.30" fill="rgb(197,197,197)"/><rect x="434.41" y="87.25" width="8.30" height="8.30" fill="rgb(191,191,191)"/><rect x="442.41" y="87.25" width="8.30" height="8.30" fill="rgb(188,188,188)"/><rect x="450.41" y="87.25" width="8.30" height="8.30" fill="rgb(196,196,196)"/><rect x="458.41" y="87.25" width="8.30" height="8.30" fill="rgb(200,200,200)"/><rect x="466.41" y="87.25" width="8.30" height="8.30" fill="rgb(242,242,242)"/><rect x="269.22" y="95.25" width="8.30" height="8.30" fill="rgb(247,247,247)"/><rect x="277.22" y="95.25" width="8.30" height="8.30" fill="rgb(246,246,246)"/><rect x="285.22" y="95.25" width="8.30" height="8.30" fill="rgb(242,242,242)"/><rect x="293.22" y="95.25" width="8.30" height="8.30" fill="rgb(243,243,243)"/><rect x="301.22" y="95.25" width="8.30" height="8.30" fill="rgb(245,245,245)"/><rect x="309.22" y="95.25" width="8.30" height="8.30" fill="rgb(244,244,244)"/><rect x="317.22" y="95.25" width="8.30" height="8.30" fill="rgb(251,251,251)"/><rect x="325.22" y="95.25" width="8.30" height="8.30" fill="rgb(253,253,253)"/><rect x="333.22" y="95.25" width="8.30" height="8.30" fill="rgb(243,243,243)"/><rect x="341.22" y="95.25" width="8.30" height="8.30" fill="rgb(242,242,242)"/><rect x="349.22" y="95.25" width="8.30" height="8.30" fill="rgb(251,251,251)"/><rect x="357.22" y="95.25" width="8.30" height="8.30" fill="rgb(248,248,248)"/><rect x="365.22" y="95.25" width="8.30" height="8.30" fill="rgb(253,253,253)"/><rect x="426.41" y="95.25" width="8.30" height="8.30" fill="rgb(244,244,244)"/><rect x="434.41" y="95.25" width="8.30" height="8.30" fill="rgb(247,247,247)"/><rect x="442.41" y="95.25" width="8.30" height="8.30" fill="rgb(242,242,242)"/><rect x="450.41" y="95.25" width="8.30" height="8.30" fill="rgb(247,247,247)"/><rect x="458.41" y="95.25" width="8.30" height="8.30" fill="rgb(252,252,252)"/><rect x="466.41" y="95.25" width="8.30" height="8.30" fill="rgb(253,253,253)"/><rect x="269.22" y="103.25" width="8.30" height="8.30" fill="rgb(253,253,253)"/><rect x="277.22" y="103.25" width="8.30" height="8.30" fill="rgb(253,253,253)"/><rect x="285.22" y="103.25" width="8.30" height="8.30" fill="rgb(252,252,252)"/><rect x="293.22" y="103.25" width="8.30" height="8.30" fill="rgb(253,253,253)"/><rect x="301.22" y="103.25" width="8.30" height="8.30" fill="rgb(251,251,251)"/><rect x="309.22" y="103.25" width="8.30" height="8.30" fill="rgb(253,253,253)"/><rect x="317.22" y="103.25" width="8.30" height="8.30" fill="rgb(253,253,253)"/><rect x="325.22" y="103.25" width="8.30" height="8.30" fill="rgb(253,253,253)"/><rect x="333.22" y="103.25" width="8.30" height="8.30" fill="rgb(253,253,253)"/><rect x="341.22" y="103.25" width="8.30" height="8.30" fill="rgb(253,253,253)"/><rect x="349.22" y="103.25" width="8.30" height="8.30" fill="rgb(252,252,252)"/><rect x="357.22" y="103.25" width="8.30" height="8.30" fill="rgb(253,253,253)"/><rect x="365.22" y="103.25" width="8.30" height="8.30" fill="rgb(253,253,253)"/><rect x="426.41" y="103.25" width="8.30" height="8.30" fill="rgb(253,253,253)"/><rect x="434.41" y="103.25" width="8.30" height="8.30" fill="rgb(253,253,253)"/><rect x="442.41" y="103.25" width="8.30" height="8.30" fill="rgb(253,253,253)"/><rect x="450.41" y="103.25" width="8.30" height="8.30" fill="rgb(253,253,253)"/><rect x="458.41" y="103.25" width="8.30" height="8.30" fill="rgb(253,253,253)"/><rect x="466.41" y="103.25" width="8.30" height="8.30" fill="rgb(253,253,253)"/><rect x="269.22" y="111.25" width="8.30" height="8.30" fill="rgb(197,197,197)"/><rect x="277.22" y="111.25" width="8.30" height="8.30" fill="rgb(195,195,195)"/><rect x="285.22" y="111.25" width="8.30" height="8.30" fill="rgb(194,194,194)"/><rect x="293.22" y="111.25" width="8.30" height="8.30" fill="rgb(198,198,198)"/><rect x="301.22" y="111.25" width="8.30" height="8.30" fill="rgb(190,190,190)"/><rect x="309.22" y="111.25" width="8.30" height="8.30" fill="rgb(193,193,193)"/><rect x="317.22" y="111.25" width="8.30" height="8.30" fill="rgb(205,205,205)"/><rect x="325.22" y="111.25" width="8.30" height="8.30" fill="rgb(247,247,247)"/><rect x="333.22" y="111.25" width="8.30" height="8.30" fill="rgb(197,197,197)"/><rect x="341.22" y="111.25" width="8.30" height="8.30" fill="rgb(203,203,203)"/><rect x="349.22" y="111.25" width="8.30" height="8.30" fill="rgb(195,195,195)"/><rect x="357.22" y="111.25" width="8.30" height="8.30" fill="rgb(205,205,205)"/><rect x="365.22" y="111.25" width="8.30" height="8.30" fill="rgb(241,241,241)"/><rect x="426.41" y="111.25" width="8.30" height="8.30" fill="rgb(206,206,206)"/><rect x="434.41" y="111.25" width="8.30" height="8.30" fill="rgb(200,200,200)"/><rect x="442.41" y="111.25" width="8.30" height="8.30" fill="rgb(194,194,194)"/><rect x="450.41" y="111.25" width="8.30" height="8.30" fill="rgb(192,192,192)"/><rect x="458.41" y="111.25" width="8.30" height="8.30" fill="rgb(195,195,195)"/><rect x="466.41" y="111.25" width="8.30" height="8.30" fill="rgb(243,243,243)"/><rect x="269.22" y="119.25" width="8.30" height="8.30" fill="rgb(230,230,230)"/><rect x="277.22" y="119.25" width="8.30" height="8.30" fill="rgb(228,228,228)"/><rect x="285.22" y="119.25" width="8.30" height="8.30" fill="rgb(232,232,232)"/><rect x="293.22" y="119.25" width="8.30" height="8.30" fill="rgb(238,238,238)"/><rect x="301.22" y="119.25" width="8.30" height="8.30" fill="rgb(234,234,234)"/><rect x="309.22" y="119.25" width="8.30" height="8.30" fill="rgb(231,231,231)"/><rect x="317.22" y="119.25" width="8.30" height="8.30" fill="rgb(237,237,237)"/><rect x="325.22" y="119.25" width="8.30" height="8.30" fill="rgb(252,252,252)"/><rect x="333.22" y="119.25" width="8.30" height="8.30" fill="rgb(234,234,234)"/><rect x="341.22" y="119.25" width="8.30" height="8.30" fill="rgb(228,228,228)"/><rect x="349.22" y="119.25" width="8.30" height="8.30" fill="rgb(232,232,232)"/><rect x="357.22" y="119.25" width="8.30" height="8.30" fill="rgb(237,237,237)"/><rect x="365.22" y="119.25" width="8.30" height="8.30" fill="rgb(249,249,249)"/><rect x="426.41" y="119.25" width="8.30" height="8.30" fill="rgb(236,236,236)"/><rect x="434.41" y="119.25" width="8.30" height="8.30" fill="rgb(233,233,233)"/><rect x="442.41" y="119.25" width="8.30" height="8.30" fill="rgb(231,231,231)"/><rect x="450.41" y="119.25" width="8.30" height="8.30" fill="rgb(228,228,228)"/><rect x="458.41" y="119.25" width="8.30" height="8.30" fill="rgb(235,235,235)"/><rect x="466.41" y="119.25" width="8.30" height="8.30" fill="rgb(250,250,250)"/><rect x="269.22" y="127.25" width="8.30" height="8.30" fill="rgb(253,253,253)"/><rect x="277.22" y="127.25" width="8.30" height="8.30" fill="rgb(253,253,253)"/><rect x="285.22" y="127.25" width="8.30" height="8.30" fill="rgb(253,253,253)"/><rect x="293.22" y="127.25" width="8.30" height="8.30" fill="rgb(253,253,253)"/><rect x="301.22" y="127.25" width="8.30" height="8.30" fill="rgb(253,253,253)"/><rect x="309.22" y="127.25" width="8.30" height="8.30" fill="rgb(253,253,253)"/><rect x="317.22" y="127.25" width="8.30" height="8.30" fill="rgb(253,253,253)"/><rect x="325.22" y="127.25" width="8.30" height="8.30" fill="rgb(253,253,253)"/><rect x="333.22" y="127.25" width="8.30" height="8.30" fill="rgb(251,251,251)"/><rect x="341.22" y="127.25" width="8.30" height="8.30" fill="rgb(251,251,251)"/><rect x="349.22" y="127.25" width="8.30" height="8.30" fill="rgb(251,251,251)"/><rect x="357.22" y="127.25" width="8.30" height="8.30" fill="rgb(253,253,253)"/><rect x="365.22" y="127.25" width="8.30" height="8.30" fill="rgb(253,253,253)"/><rect x="426.41" y="127.25" width="8.30" height="8.30" fill="rgb(253,253,253)"/><rect x="434.41" y="127.25" width="8.30" height="8.30" fill="rgb(251,251,251)"/><rect x="442.41" y="127.25" width="8.30" height="8.30" fill="rgb(253,253,253)"/><rect x="450.41" y="127.25" width="8.30" height="8.30" fill="rgb(253,253,253)"/><rect x="458.41" y="127.25" width="8.30" height="8.30" fill="rgb(253,253,253)"/><rect x="466.41" y="127.25" width="8.30" height="8.30" fill="rgb(253,253,253)"/><rect x="269.22" y="135.25" width="8.30" height="8.30" fill="rgb(213,213,213)"/><rect x="277.22" y="135.25" width="8.30" height="8.30" fill="rgb(211,211,211)"/><rect x="285.22" y="135.25" width="8.30" height="8.30" fill="rgb(207,207,207)"/><rect x="293.22" y="135.25" width="8.30" height="8.30" fill="rgb(211,211,211)"/><rect x="301.22" y="135.25" width="8.30" height="8.30" fill="rgb(216,216,216)"/><rect x="309.22" y="135.25" width="8.30" height="8.30" fill="rgb(212,212,212)"/><rect x="317.22" y="135.25" width="8.30" height="8.30" fill="rgb(220,220,220)"/><rect x="325.22" y="135.25" width="8.30" height="8.30" fill="rgb(249,249,249)"/><rect x="333.22" y="135.25" width="8.30" height="8.30" fill="rgb(215,215,215)"/><rect x="341.22" y="135.25" width="8.30" height="8.30" fill="rgb(212,212,212)"/><rect x="349.22" y="135.25" width="8.30" height="8.30" fill="rgb(215,215,215)"/><rect x="357.22" y="135.25" width="8.30" height="8.30" fill="rgb(218,218,218)"/><rect x="365.22" y="135.25" width="8.30" height="8.30" fill="rgb(245,245,245)"/><rect x="426.41" y="135.25" width="8.30" height="8.30" fill="rgb(212,212,212)"/><rect x="434.41" y="135.25" width="8.30" height="8.30" fill="rgb(208,208,208)"/><rect x="442.41" y="135.25" width="8.30" height="8.30" fill="rgb(209,209,209)"/><rect x="450.41" y="135.25" width="8.30" height="8.30" fill="rgb(208,208,208)"/><rect x="458.41" y="135.25" width="8.30" height="8.30" fill="rgb(214,214,214)"/><rect x="466.41" y="135.25" width="8.30" height="8.30" fill="rgb(246,246,246)"/><rect x="269.22" y="143.25" width="8.30" height="8.30" fill="rgb(216,216,216)"/><rect x="277.22" y="143.25" width="8.30" height="8.30" fill="rgb(214,214,214)"/><rect x="285.22" y="143.25" width="8.30" height="8.30" fill="rgb(212,212,212)"/><rect x="293.22" y="143.25" width="8.30" height="8.30" fill="rgb(224,224,224)"/><rect x="301.22" y="143.25" width="8.30" height="8.30" fill="rgb(214,214,214)"/><rect x="309.22" y="143.25" width="8.30" height="8.30" fill="rgb(215,215,215)"/><rect x="317.22" y="143.25" width="8.30" height="8.30" fill="rgb(224,224,224)"/><rect x="325.22" y="143.25" width="8.30" height="8.30" fill="rgb(250,250,250)"/><rect x="333.22" y="143.25" width="8.30" height="8.30" fill="rgb(219,219,219)"/><rect x="341.22" y="143.25" width="8.30" height="8.30" fill="rgb(216,216,216)"/><rect x="349.22" y="143.25" width="8.30" height="8.30" fill="rgb(219,219,219)"/><rect x="357.22" y="143.25" width="8.30" height="8.30" fill="rgb(219,219,219)"/><rect x="365.22" y="143.25" width="8.30" height="8.30" fill="rgb(246,246,246)"/><rect x="426.41" y="143.25" width="8.30" height="8.30" fill="rgb(219,219,219)"/><rect x="434.41" y="143.25" width="8.30" height="8.30" fill="rgb(215,215,215)"/><rect x="442.41" y="143.25" width="8.30" height="8.30" fill="rgb(210,210,210)"/><rect x="450.41" y="143.25" width="8.30" height="8.30" fill="rgb(215,215,215)"/><rect x="458.41" y="143.25" width="8.30" height="8.30" fill="rgb(214,214,214)"/><rect x="466.41" y="143.25" width="8.30" height="8.30" fill="rgb(247,247,247)"/><rect x="269.22" y="151.25" width="8.30" height="8.30" fill="rgb(250,250,250)"/><rect x="277.22" y="151.25" width="8.30" height="8.30" fill="rgb(253,253,253)"/><rect x="285.22" y="151.25" width="8.30" height="8.30" fill="rgb(251,251,251)"/><rect x="293.22" y="151.25" width="8.30" height="8.30" fill="rgb(253,253,253)"/><rect x="301.22" y="151.25" width="8.30" height="8.30" fill="rgb(253,253,253)"/><rect x="309.22" y="151.25" width="8.30" height="8.30" fill="rgb(253,253,253)"/><rect x="317.22" y="151.25" width="8.30" height="8.30" fill="rgb(253,253,253)"/><rect x="325.22" y="151.25" width="8.30" height="8.30" fill="rgb(253,253,253)"/><rect x="333.22" y="151.25" width="8.30" height="8.30" fill="rgb(253,253,253)"/><rect x="341.22" y="151.25" width="8.30" height="8.30" fill="rgb(253,253,253)"/><rect x="349.22" y="151.25" width="8.30" height="8.30" fill="rgb(253,253,253)"/><rect x="357.22" y="151.25" width="8.30" height="8.30" fill="rgb(251,251,251)"/><rect x="365.22" y="151.25" width="8.30" height="8.30" fill="rgb(253,253,253)"/><rect x="426.41" y="151.25" width="8.30" height="8.30" fill="rgb(253,253,253)"/><rect x="434.41" y="151.25" width="8.30" height="8.30" fill="rgb(252,252,252)"/><rect x="442.41" y="151.25" width="8.30" height="8.30" fill="rgb(252,252,252)"/><rect x="450.41" y="151.25" width="8.30" height="8.30" fill="rgb(253,253,253)"/><rect x="458.41" y="151.25" width="8.30" height="8.30" fill="rgb(253,253,253)"/><rect x="466.41" y="151.25" width="8.30" height="8.30" fill="rgb(253,253,253)"/><rect x="269.22" y="159.25" width="8.30" height="8.30" fill="rgb(229,229,229)"/><rect x="277.22" y="159.25" width="8.30" height="8.30" fill="rgb(229,229,229)"/><rect x="285.22" y="159.25" width="8.30" height="8.30" fill="rgb(231,231,231)"/><rect x="293.22" y="159.25" width="8.30" height="8.30" fill="rgb(229,229,229)"/><rect x="301.22" y="159.25" width="8.30" height="8.30" fill="rgb(228,228,228)"/><rect x="309.22" y="159.25" width="8.30" height="8.30" fill="rgb(226,226,226)"/><rect x="317.22" y="159.25" width="8.30" height="8.30" fill="rgb(232,232,232)"/><rect x="325.22" y="159.25" width="8.30" height="8.30" fill="rgb(251,251,251)"/><rect x="333.22" y="159.25" width="8.30" height="8.30" fill="rgb(228,228,228)"/><rect x="341.22" y="159.25" width="8.30" height="8.30" fill="rgb(227,227,227)"/><rect x="349.22" y="159.25" width="8.30" height="8.30" fill="rgb(227,227,227)"/><rect x="357.22" y="159.25" width="8.30" height="8.30" fill="rgb(229,229,229)"/><rect x="365.22" y="159.25" width="8.30" height="8.30" fill="rgb(248,248,248)"/><rect x="426.41" y="159.25" width="8.30" height="8.30" fill="rgb(234,234,234)"/><rect x="434.41" y="159.25" width="8.30" height="8.30" fill="rgb(228,228,228)"/><rect x="442.41" y="159.25" width="8.30" height="8.30" fill="rgb(230,230,230)"/><rect x="450.41" y="159.25" width="8.30" height="8.30" fill="rgb(231,231,231)"/><rect x="458.41" y="159.25" width="8.30" height="8.30" fill="rgb(225,225,225)"/><rect x="466.41" y="159.25" width="8.30" height="8.30" fill="rgb(249,249,249)"/><rect x="269.22" y="167.25" width="8.30" height="8.30" fill="rgb(205,205,205)"/><rect x="277.22" y="167.25" width="8.30" height="8.30" fill="rgb(204,204,204)"/><rect x="285.22" y="167.25" width="8.30" height="8.30" fill="rgb(203,203,203)"/><rect x="293.22" y="167.25" width="8.30" height="8.30" fill="rgb(203,203,203)"/><rect x="301.22" y="167.25" width="8.30" height="8.30" fill="rgb(196,196,196)"/><rect x="309.22" y="167.25" width="8.30" height="8.30" fill="rgb(199,199,199)"/><rect x="317.22" y="167.25" width="8.30" height="8.30" fill="rgb(206,206,206)"/><rect x="325.22" y="167.25" width="8.30" height="8.30" fill="rgb(248,248,248)"/><rect x="333.22" y="167.25" width="8.30" height="8.30" fill="rgb(197,197,197)"/><rect x="341.22" y="167.25" width="8.30" height="8.30" fill="rgb(198,198,198)"/><rect x="349.22" y="167.25" width="8.30" height="8.30" fill="rgb(201,201,201)"/><rect x="357.22" y="167.25" width="8.30" height="8.30" fill="rgb(208,208,208)"/><rect x="365.22" y="167.25" width="8.30" height="8.30" fill="rgb(242,242,242)"/><rect x="426.41" y="167.25" width="8.30" height="8.30" fill="rgb(209,209,209)"/><rect x="434.41" y="167.25" width="8.30" height="8.30" fill="rgb(196,196,196)"/><rect x="442.41" y="167.25" width="8.30" height="8.30" fill="rgb(202,202,202)"/><rect x="450.41" y="167.25" width="8.30" height="8.30" fill="rgb(201,201,201)"/><rect x="458.41" y="167.25" width="8.30" height="8.30" fill="rgb(199,199,199)"/><rect x="466.41" y="167.25" width="8.30" height="8.30" fill="rgb(244,244,244)"/><rect x="269.22" y="175.25" width="8.30" height="8.30" fill="rgb(253,253,253)"/><rect x="277.22" y="175.25" width="8.30" height="8.30" fill="rgb(253,253,253)"/><rect x="285.22" y="175.25" width="8.30" height="8.30" fill="rgb(252,252,252)"/><rect x="293.22" y="175.25" width="8.30" height="8.30" fill="rgb(253,253,253)"/><rect x="301.22" y="175.25" width="8.30" height="8.30" fill="rgb(253,253,253)"/><rect x="309.22" y="175.25" width="8.30" height="8.30" fill="rgb(253,253,253)"/><rect x="317.22" y="175.25" width="8.30" height="8.30" fill="rgb(253,253,253)"/><rect x="325.22" y="175.25" width="8.30" height="8.30" fill="rgb(253,253,253)"/><rect x="333.22" y="175.25" width="8.30" height="8.30" fill="rgb(253,253,253)"/><rect x="341.22" y="175.25" width="8.30" height="8.30" fill="rgb(251,251,251)"/><rect x="349.22" y="175.25" width="8.30" height="8.30" fill="rgb(253,253,253)"/><rect x="357.22" y="175.25" width="8.30" height="8.30" fill="rgb(253,253,253)"/><rect x="365.22" y="175.25" width="8.30" height="8.30" fill="rgb(253,253,253)"/><rect x="426.41" y="175.25" width="8.30" height="8.30" fill="rgb(253,253,253)"/><rect x="434.41" y="175.25" width="8.30" height="8.30" fill="rgb(251,251,251)"/><rect x="442.41" y="175.25" width="8.30" height="8.30" fill="rgb(253,253,253)"/><rect x="450.41" y="175.25" width="8.30" height="8.30" fill="rgb(253,253,253)"/><rect x="458.41" y="175.25" width="8.30" height="8.30" fill="rgb(250,250,250)"/><rect x="466.41" y="175.25" width="8.30" height="8.30" fill="rgb(253,253,253)"/><rect x="269.22" y="183.25" width="8.30" height="8.30" fill="rgb(244,244,244)"/><rect x="277.22" y="183.25" width="8.30" height="8.30" fill="rgb(241,241,241)"/><rect x="285.22" y="183.25" width="8.30" height="8.30" fill="rgb(237,237,237)"/><rect x="293.22" y="183.25" width="8.30" height="8.30" fill="rgb(242,242,242)"/><rect x="301.22" y="183.25" width="8.30" height="8.30" fill="rgb(243,243,243)"/><rect x="309.22" y="183.25" width="8.30" height="8.30" fill="rgb(242,242,242)"/><rect x="317.22" y="183.25" width="8.30" height="8.30" fill="rgb(240,240,240)"/><rect x="325.22" y="183.25" width="8.30" height="8.30" fill="rgb(253,253,253)"/><rect x="333.22" y="183.25" width="8.30" height="8.30" fill="rgb(247,247,247)"/><rect x="341.22" y="183.25" width="8.30" height="8.30" fill="rgb(246,246,246)"/><rect x="349.22" y="183.25" width="8.30" height="8.30" fill="rgb(247,247,247)"/><rect x="357.22" y="183.25" width="8.30" height="8.30" fill="rgb(239,239,239)"/><rect x="365.22" y="183.25" width="8.30" height="8.30" fill="rgb(252,252,252)"/><rect x="426.41" y="183.25" width="8.30" height="8.30" fill="rgb(241,241,241)"/><rect x="434.41" y="183.25" width="8.30" height="8.30" fill="rgb(237,237,237)"/><rect x="442.41" y="183.25" width="8.30" height="8.30" fill="rgb(245,245,245)"/><rect x="450.41" y="183.25" width="8.30" height="8.30" fill="rgb(240,240,240)"/><rect x="458.41" y="183.25" width="8.30" height="8.30" fill="rgb(239,239,239)"/><rect x="466.41" y="183.25" width="8.30" height="8.30" fill="rgb(252,252,252)"/><rect x="269.22" y="191.25" width="8.30" height="8.30" fill="rgb(196,196,196)"/><rect x="277.22" y="191.25" width="8.30" height="8.30" fill="rgb(196,196,196)"/><rect x="285.22" y="191.25" width="8.30" height="8.30" fill="rgb(195,195,195)"/><rect x="293.22" y="191.25" width="8.30" height="8.30" fill="rgb(197,197,197)"/><rect x="301.22" y="191.25" width="8.30" height="8.30" fill="rgb(189,189,189)"/><rect x="309.22" y="191.25" width="8.30" height="8.30" fill="rgb(196,196,196)"/><rect x="317.22" y="191.25" width="8.30" height="8.30" fill="rgb(205,205,205)"/><rect x="325.22" y="191.25" width="8.30" height="8.30" fill="rgb(247,247,247)"/><rect x="333.22" y="191.25" width="8.30" height="8.30" fill="rgb(194,194,194)"/><rect x="341.22" y="191.25" width="8.30" height="8.30" fill="rgb(191,191,191)"/><rect x="349.22" y="191.25" width="8.30" height="8.30" fill="rgb(188,188,188)"/><rect x="357.22" y="191.25" width="8.30" height="8.30" fill="rgb(200,200,200)"/><rect x="365.22" y="191.25" width="8.30" height="8.30" fill="rgb(241,241,241)"/><rect x="426.41" y="191.25" width="8.30" height="8.30" fill="rgb(198,198,198)"/><rect x="434.41" y="191.25" width="8.30" height="8.30" fill="rgb(188,188,188)"/><rect x="442.41" y="191.25" width="8.30" height="8.30" fill="rgb(196,196,196)"/><rect x="450.41" y="191.25" width="8.30" height="8.30" fill="rgb(193,193,193)"/><rect x="458.41" y="191.25" width="8.30" height="8.30" fill="rgb(198,198,198)"/><rect x="466.41" y="191.25" width="8.30" height="8.30" fill="rgb(242,242,242)"/><rect x="269.22" y="199.25" width="8.30" height="8.30" fill="rgb(243,243,243)"/><rect x="277.22" y="199.25" width="8.30" height="8.30" fill="rgb(250,250,250)"/><rect x="285.22" y="199.25" width="8.30" height="8.30" fill="rgb(242,242,242)"/><rect x="293.22" y="199.25" width="8.30" height="8.30" fill="rgb(251,251,251)"/><rect x="301.22" y="199.25" width="8.30" height="8.30" fill="rgb(246,246,246)"/><rect x="309.22" y="199.25" width="8.30" height="8.30" fill="rgb(245,245,245)"/><rect x="317.22" y="199.25" width="8.30" height="8.30" fill="rgb(249,249,249)"/><rect x="325.22" y="199.25" width="8.30" height="8.30" fill="rgb(253,253,253)"/><rect x="333.22" y="199.25" width="8.30" height="8.30" fill="rgb(251,251,251)"/><rect x="341.22" y="199.25" width="8.30" height="8.30" fill="rgb(245,245,245)"/><rect x="349.22" y="199.25" width="8.30" height="8.30" fill="rgb(243,243,243)"/><rect x="357.22" y="199.25" width="8.30" height="8.30" fill="rgb(248,248,248)"/><rect x="365.22" y="199.25" width="8.30" height="8.30" fill="rgb(253,253,253)"/><rect x="426.41" y="199.25" width="8.30" height="8.30" fill="rgb(245,245,245)"/><rect x="434.41" y="199.25" width="8.30" height="8.30" fill="rgb(243,243,243)"/><rect x="442.41" y="199.25" width="8.30" height="8.30" fill="rgb(243,243,243)"/><rect x="450.41" y="199.25" width="8.30" height="8.30" fill="rgb(242,242,242)"/><rect x="458.41" y="199.25" width="8.30" height="8.30" fill="rgb(244,244,244)"/><rect x="466.41" y="199.25" width="8.30" height="8.30" fill="rgb(253,253,253)"/><rect x="269.22" y="207.25" width="8.30" height="8.30" fill="rgb(253,253,253)"/><rect x="277.22" y="207.25" width="8.30" height="8.30" fill="rgb(253,253,253)"/><rect x="285.22" y="207.25" width="8.30" height="8.30" fill="rgb(253,253,253)"/><rect x="293.22" y="207.25" width="8.30" height="8.30" fill="rgb(252,252,252)"/><rect x="301.22" y="207.25" width="8.30" height="8.30" fill="rgb(253,253,253)"/><rect x="309.22" y="207.25" width="8.30" height="8.30" fill="rgb(251,251,251)"/><rect x="317.22" y="207.25" width="8.30" height="8.30" fill="rgb(253,253,253)"/><rect x="325.22" y="207.25" width="8.30" height="8.30" fill="rgb(253,253,253)"/><rect x="333.22" y="207.25" width="8.30" height="8.30" fill="rgb(250,250,250)"/><rect x="341.22" y="207.25" width="8.30" height="8.30" fill="rgb(252,252,252)"/><rect x="349.22" y="207.25" width="8.30" height="8.30" fill="rgb(250,250,250)"/><rect x="357.22" y="207.25" width="8.30" height="8.30" fill="rgb(253,253,253)"/><rect x="365.22" y="207.25" width="8.30" height="8.30" fill="rgb(253,253,253)"/><rect x="426.41" y="207.25" width="8.30" height="8.30" fill="rgb(253,253,253)"/><rect x="434.41" y="207.25" width="8.30" height="8.30" fill="rgb(251,251,251)"/><rect x="442.41" y="207.25" width="8.30" height="8.30" fill="rgb(253,253,253)"/><rect x="450.41" y="207.25" width="8.30" height="8.30" fill="rgb(253,253,253)"/><rect x="458.41" y="207.25" width="8.30" height="8.30" fill="rgb(251,251,251)"/><rect x="466.41" y="207.25" width="8.30" height="8.30" fill="rgb(253,253,253)"/><rect x="269.22" y="215.25" width="8.30" height="8.30" fill="rgb(203,203,203)"/><rect x="277.22" y="215.25" width="8.30" height="8.30" fill="rgb(195,195,195)"/><rect x="285.22" y="215.25" width="8.30" height="8.30" fill="rgb(195,195,195)"/><rect x="293.22" y="215.25" width="8.30" height="8.30" fill="rgb(206,206,206)"/><rect x="301.22" y="215.25" width="8.30" height="8.30" fill="rgb(194,194,194)"/><rect x="309.22" y="215.25" width="8.30" height="8.30" fill="rgb(195,195,195)"/><rect x="317.22" y="215.25" width="8.30" height="8.30" fill="rgb(209,209,209)"/><rect x="325.22" y="215.25" width="8.30" height="8.30" fill="rgb(247,247,247)"/><rect x="333.22" y="215.25" width="8.30" height="8.30" fill="rgb(200,200,200)"/><rect x="341.22" y="215.25" width="8.30" height="8.30" fill="rgb(197,197,197)"/><rect x="349.22" y="215.25" width="8.30" height="8.30" fill="rgb(199,199,199)"/><rect x="357.22" y="215.25" width="8.30" height="8.30" fill="rgb(203,203,203)"/><rect x="365.22" y="215.25" width="8.30" height="8.30" fill="rgb(241,241,241)"/><rect x="426.41" y="215.25" width="8.30" height="8.30" fill="rgb(202,202,202)"/><rect x="434.41" y="215.25" width="8.30" height="8.30" fill="rgb(194,194,194)"/><rect x="442.41" y="215.25" width="8.30" height="8.30" fill="rgb(194,194,194)"/><rect x="450.41" y="215.25" width="8.30" height="8.30" fill="rgb(191,191,191)"/><rect x="458.41" y="215.25" width="8.30" height="8.30" fill="rgb(194,194,194)"/><rect x="466.41" y="215.25" width="8.30" height="8.30" fill="rgb(243,243,243)"/><rect x="269.22" y="223.25" width="8.30" height="8.30" fill="rgb(228,228,228)"/><rect x="277.22" y="223.25" width="8.30" height="8.30" fill="rgb(233,233,233)"/><rect x="285.22" y="223.25" width="8.30" height="8.30" fill="rgb(228,228,228)"/><rect x="293.22" y="223.25" width="8.30" height="8.30" fill="rgb(230,230,230)"/><rect x="301.22" y="223.25" width="8.30" height="8.30" fill="rgb(227,227,227)"/><rect x="309.22" y="223.25" width="8.30" height="8.30" fill="rgb(234,234,234)"/><rect x="317.22" y="223.25" width="8.30" height="8.30" fill="rgb(239,239,239)"/><rect x="325.22" y="223.25" width="8.30" height="8.30" fill="rgb(252,252,252)"/><rect x="333.22" y="223.25" width="8.30" height="8.30" fill="rgb(233,233,233)"/><rect x="341.22" y="223.25" width="8.30" height="8.30" fill="rgb(230,230,230)"/><rect x="349.22" y="223.25" width="8.30" height="8.30" fill="rgb(228,228,228)"/><rect x="357.22" y="223.25" width="8.30" height="8.30" fill="rgb(231,231,231)"/><rect x="365.22" y="223.25" width="8.30" height="8.30" fill="rgb(249,249,249)"/><rect x="426.41" y="223.25" width="8.30" height="8.30" fill="rgb(233,233,233)"/><rect x="434.41" y="223.25" width="8.30" height="8.30" fill="rgb(227,227,227)"/><rect x="442.41" y="223.25" width="8.30" height="8.30" fill="rgb(230,230,230)"/><rect x="450.41" y="223.25" width="8.30" height="8.30" fill="rgb(228,228,228)"/><rect x="458.41" y="223.25" width="8.30" height="8.30" fill="rgb(237,237,237)"/><rect x="466.41" y="223.25" width="8.30" height="8.30" fill="rgb(250,250,250)"/><rect x="269.22" y="231.25" width="8.30" height="8.30" fill="rgb(253,253,253)"/><rect x="277.22" y="231.25" width="8.30" height="8.30" fill="rgb(253,253,253)"/><rect x="285.22" y="231.25" width="8.30" height="8.30" fill="rgb(252,252,252)"/><rect x="293.22" y="231.25" width="8.30" height="8.30" fill="rgb(253,253,253)"/><rect x="301.22" y="231.25" width="8.30" height="8.30" fill="rgb(253,253,253)"/><rect x="309.22" y="231.25" width="8.30" height="8.30" fill="rgb(253,253,253)"/><rect x="317.22" y="231.25" width="8.30" height="8.30" fill="rgb(250,250,250)"/><rect x="325.22" y="231.25" width="8.30" height="8.30" fill="rgb(253,253,253)"/><rect x="333.22" y="231.25" width="8.30" height="8.30" fill="rgb(253,253,253)"/><rect x="341.22" y="231.25" width="8.30" height="8.30" fill="rgb(253,253,253)"/><rect x="349.22" y="231.25" width="8.30" height="8.30" fill="rgb(253,253,253)"/><rect x="357.22" y="231.25" width="8.30" height="8.30" fill="rgb(252,252,252)"/><rect x="365.22" y="231.25" width="8.30" height="8.30" fill="rgb(253,253,253)"/><rect x="426.41" y="231.25" width="8.30" height="8.30" fill="rgb(253,253,253)"/><rect x="434.41" y="231.25" width="8.30" height="8.30" fill="rgb(250,250,250)"/><rect x="442.41" y="231.25" width="8.30" height="8.30" fill="rgb(252,252,252)"/><rect x="450.41" y="231.25" width="8.30" height="8.30" fill="rgb(250,250,250)"/><rect x="458.41" y="231.25" width="8.30" height="8.30" fill="rgb(253,253,253)"/><rect x="466.41" y="231.25" width="8.30" height="8.30" fill="rgb(253,253,253)"/><rect x="269.22" y="239.25" width="8.30" height="8.30" fill="rgb(210,210,210)"/><rect x="277.22" y="239.25" width="8.30" height="8.30" fill="rgb(206,206,206)"/><rect x="285.22" y="239.25" width="8.30" height="8.30" fill="rgb(209,209,209)"/><rect x="293.22" y="239.25" width="8.30" height="8.30" fill="rgb(213,213,213)"/><rect x="301.22" y="239.25" width="8.30" height="8.30" fill="rgb(212,212,212)"/><rect x="309.22" y="239.25" width="8.30" height="8.30" fill="rgb(211,211,211)"/><rect x="317.22" y="239.25" width="8.30" height="8.30" fill="rgb(222,222,222)"/><rect x="325.22" y="239.25" width="8.30" height="8.30" fill="rgb(249,249,249)"/><rect x="333.22" y="239.25" width="8.30" height="8.30" fill="rgb(212,212,212)"/><rect x="341.22" y="239.25" width="8.30" height="8.30" fill="rgb(215,215,215)"/><rect x="349.22" y="239.25" width="8.30" height="8.30" fill="rgb(215,215,215)"/><rect x="357.22" y="239.25" width="8.30" height="8.30" fill="rgb(214,214,214)"/><rect x="365.22" y="239.25" width="8.30" height="8.30" fill="rgb(245,245,245)"/><rect x="426.41" y="239.25" width="8.30" height="8.30" fill="rgb(213,213,213)"/><rect x="434.41" y="239.25" width="8.30" height="8.30" fill="rgb(216,216,216)"/><rect x="442.41" y="239.25" width="8.30" height="8.30" fill="rgb(207,207,207)"/><rect x="450.41" y="239.25" width="8.30" height="8.30" fill="rgb(213,213,213)"/><rect x="458.41" y="239.25" width="8.30" height="8.30" fill="rgb(214,214,214)"/><rect x="466.41" y="239.25" width="8.30" height="8.30" fill="rgb(246,246,246)"/><rect x="269.22" y="247.25" width="8.30" height="8.30" fill="rgb(214,214,214)"/><rect x="277.22" y="247.25" width="8.30" height="8.30" fill="rgb(219,219,219)"/><rect x="285.22" y="247.25" width="8.30" height="8.30" fill="rgb(219,219,219)"/><rect x="293.22" y="247.25" width="8.30" height="8.30" fill="rgb(221,221,221)"/><rect x="301.22" y="247.25" width="8.30" height="8.30" fill="rgb(218,218,218)"/><rect x="309.22" y="247.25" width="8.30" height="8.30" fill="rgb(218,218,218)"/><rect x="317.22" y="247.25" width="8.30" height="8.30" fill="rgb(219,219,219)"/><rect x="325.22" y="247.25" width="8.30" height="8.30" fill="rgb(250,250,250)"/><rect x="333.22" y="247.25" width="8.30" height="8.30" fill="rgb(215,215,215)"/><rect x="341.22" y="247.25" width="8.30" height="8.30" fill="rgb(217,217,217)"/><rect x="349.22" y="247.25" width="8.30" height="8.30" fill="rgb(219,219,219)"/><rect x="357.22" y="247.25" width="8.30" height="8.30" fill="rgb(222,222,222)"/><rect x="365.22" y="247.25" width="8.30" height="8.30" fill="rgb(246,246,246)"/><rect x="426.41" y="247.25" width="8.30" height="8.30" fill="rgb(222,222,222)"/><rect x="434.41" y="247.25" width="8.30" height="8.30" fill="rgb(216,216,216)"/><rect x="442.41" y="247.25" width="8.30" height="8.30" fill="rgb(219,219,219)"/><rect x="450.41" y="247.25" width="8.30" height="8.30" fill="rgb(217,217,217)"/><rect x="458.41" y="247.25" width="8.30" height="8.30" fill="rgb(219,219,219)"/><rect x="466.41" y="247.25" width="8.30" height="8.30" fill="rgb(247,247,247)"/><rect x="269.22" y="255.25" width="8.30" height="8.30" fill="rgb(252,252,252)"/><rect x="277.22" y="255.25" width="8.30" height="8.30" fill="rgb(250,250,250)"/><rect x="285.22" y="255.25" width="8.30" height="8.30" fill="rgb(251,251,251)"/><rect x="293.22" y="255.25" width="8.30" height="8.30" fill="rgb(253,253,253)"/><rect x="301.22" y="255.25" width="8.30" height="8.30" fill="rgb(251,251,251)"/><rect x="309.22" y="255.25" width="8.30" height="8.30" fill="rgb(253,253,253)"/><rect x="317.22" y="255.25" width="8.30" height="8.30" fill="rgb(253,253,253)"/><rect x="325.22" y="255.25" width="8.30" height="8.30" fill="rgb(253,253,253)"/><rect x="333.22" y="255.25" width="8.30" height="8.30" fill="rgb(253,253,253)"/><rect x="341.22" y="255.25" width="8.30" height="8.30" fill="rgb(253,253,253)"/><rect x="349.22" y="255.25" width="8.30" height="8.30" fill="rgb(253,253,253)"/><rect x="357.22" y="255.25" width="8.30" height="8.30" fill="rgb(253,253,253)"/><rect x="365.22" y="255.25" width="8.30" height="8.30" fill="rgb(253,253,253)"/><rect x="426.41" y="255.25" width="8.30" height="8.30" fill="rgb(250,250,250)"/><rect x="434.41" y="255.25" width="8.30" height="8.30" fill="rgb(253,253,253)"/><rect x="442.41" y="255.25" width="8.30" height="8.30" fill="rgb(253,253,253)"/><rect x="450.41" y="255.25" width="8.30" height="8.30" fill="rgb(253,253,253)"/><rect x="458.41" y="255.25" width="8.30" height="8.30" fill="rgb(253,253,253)"/><rect x="466.41" y="255.25" width="8.30" height="8.30" fill="rgb(253,253,253)"/><rect x="269.22" y="263.25" width="8.30" height="8.30" fill="rgb(230,230,230)"/><rect x="277.22" y="263.25" width="8.30" height="8.30" fill="rgb(222,222,222)"/><rect x="285.22" y="263.25" width="8.30" height="8.30" fill="rgb(229,229,229)"/><rect x="293.22" y="263.25" width="8.30" height="8.30" fill="rgb(227,227,227)"/><rect x="301.22" y="263.25" width="8.30" height="8.30" fill="rgb(222,222,222)"/><rect x="309.22" y="263.25" width="8.30" height="8.30" fill="rgb(224,224,224)"/><rect x="317.22" y="263.25" width="8.30" height="8.30" fill="rgb(234,234,234)"/><rect x="325.22" y="263.25" width="8.30" height="8.30" fill="rgb(251,251,251)"/><rect x="333.22" y="263.25" width="8.30" height="8.30" fill="rgb(223,223,223)"/><rect x="341.22" y="263.25" width="8.30" height="8.30" fill="rgb(230,230,230)"/><rect x="349.22" y="263.25" width="8.30" height="8.30" fill="rgb(231,231,231)"/><rect x="357.22" y="263.25" width="8.30" height="8.30" fill="rgb(229,229,229)"/><rect x="365.22" y="263.25" width="8.30" height="8.30" fill="rgb(248,248,248)"/><rect x="426.41" y="263.25" width="8.30" height="8.30" fill="rgb(228,228,228)"/><rect x="434.41" y="263.25" width="8.30" height="8.30" fill="rgb(226,226,226)"/><rect x="442.41" y="263.25" width="8.30" height="8.30" fill="rgb(228,228,228)"/><rect x="450.41" y="263.25" width="8.30" height="8.30" fill="rgb(229,229,229)"/><rect x="458.41" y="263.25" width="8.30" height="8.30" fill="rgb(229,229,229)"/><rect x="466.41" y="263.25" width="8.30" height="8.30" fill="rgb(249,249,249)"/><rect x="269.22" y="271.25" width="8.30" height="8.30" fill="rgb(205,205,205)"/><rect x="277.22" y="271.25" width="8.30" height="8.30" fill="rgb(195,195,195)"/><rect x="285.22" y="271.25" width="8.30" height="8.30" fill="rgb(196,196,196)"/><rect x="293.22" y="271.25" width="8.30" height="8.30" fill="rgb(204,204,204)"/><rect x="301.22" y="271.25" width="8.30" height="8.30" fill="rgb(202,202,202)"/><rect x="309.22" y="271.25" width="8.30" height="8.30" fill="rgb(198,198,198)"/><rect x="317.22" y="271.25" width="8.30" height="8.30" fill="rgb(211,211,211)"/><rect x="325.22" y="271.25" width="8.30" height="8.30" fill="rgb(248,248,248)"/><rect x="333.22" y="271.25" width="8.30" height="8.30" fill="rgb(195,195,195)"/><rect x="341.22" y="271.25" width="8.30" height="8.30" fill="rgb(198,198,198)"/><rect x="349.22" y="271.25" width="8.30" height="8.30" fill="rgb(197,197,197)"/><rect x="357.22" y="271.25" width="8.30" height="8.30" fill="rgb(207,207,207)"/><rect x="365.22" y="271.25" width="8.30" height="8.30" fill="rgb(242,242,242)"/><rect x="426.41" y="271.25" width="8.30" height="8.30" fill="rgb(207,207,207)"/><rect x="434.41" y="271.25" width="8.30" height="8.30" fill="rgb(201,201,201)"/><rect x="442.41" y="271.25" width="8.30" height="8.30" fill="rgb(197,197,197)"/><rect x="450.41" y="271.25" width="8.30" height="8.30" fill="rgb(200,200,200)"/><rect x="458.41" y="271.25" width="8.30" height="8.30" fill="rgb(202,202,202)"/><rect x="466.41" y="271.25" width="8.30" height="8.30" fill="rgb(244,244,244)"/><rect x="269.22" y="279.25" width="8.30" height="8.30" fill="rgb(253,253,253)"/><rect x="277.22" y="279.25" width="8.30" height="8.30" fill="rgb(251,251,251)"/><rect x="285.22" y="279.25" width="8.30" height="8.30" fill="rgb(253,253,253)"/><rect x="293.22" y="279.25" width="8.30" height="8.30" fill="rgb(251,251,251)"/><rect x="301.22" y="279.25" width="8.30" height="8.30" fill="rgb(253,253,253)"/><rect x="309.22" y="279.25" width="8.30" height="8.30" fill="rgb(253,253,253)"/><rect x="317.22" y="279.25" width="8.30" height="8.30" fill="rgb(250,250,250)"/><rect x="325.22" y="279.25" width="8.30" height="8.30" fill="rgb(253,253,253)"/><rect x="333.22" y="279.25" width="8.30" height="8.30" fill="rgb(253,253,253)"/><rect x="341.22" y="279.25" width="8.30" height="8.30" fill="rgb(253,253,253)"/><rect x="349.22" y="279.25" width="8.30" height="8.30" fill="rgb(253,253,253)"/><rect x="357.22" y="279.25" width="8.30" height="8.30" fill="rgb(253,253,253)"/><rect x="365.22" y="279.25" width="8.30" height="8.30" fill="rgb(253,253,253)"/><rect x="426.41" y="279.25" width="8.30" height="8.30" fill="rgb(252,252,252)"/><rect x="434.41" y="279.25" width="8.30" height="8.30" fill="rgb(252,252,252)"/><rect x="442.41" y="279.25" width="8.30" height="8.30" fill="rgb(253,253,253)"/><rect x="450.41" y="279.25" width="8.30" height="8.30" fill="rgb(252,252,252)"/><rect x="458.41" y="279.25" width="8.30" height="8.30" fill="rgb(253,253,253)"/><rect x="466.41" y="279.25" width="8.30" height="8.30" fill="rgb(253,253,253)"/><rect x="269.22" y="287.25" width="8.30" height="8.30" fill="rgb(239,239,239)"/><rect x="277.22" y="287.25" width="8.30" height="8.30" fill="rgb(242,242,242)"/><rect x="285.22" y="287.25" width="8.30" height="8.30" fill="rgb(247,247,247)"/><rect x="293.22" y="287.25" width="8.30" height="8.30" fill="rgb(240,240,240)"/><rect x="301.22" y="287.25" width="8.30" height="8.30" fill="rgb(245,245,245)"/><rect x="309.22" y="287.25" width="8.30" height="8.30" fill="rgb(242,242,242)"/><rect x="317.22" y="287.25" width="8.30" height="8.30" fill="rgb(248,248,248)"/><rect x="325.22" y="287.25" width="8.30" height="8.30" fill="rgb(253,253,253)"/><rect x="333.22" y="287.25" width="8.30" height="8.30" fill="rgb(244,244,244)"/><rect x="341.22" y="287.25" width="8.30" height="8.30" fill="rgb(240,240,240)"/><rect x="349.22" y="287.25" width="8.30" height="8.30" fill="rgb(246,246,246)"/><rect x="357.22" y="287.25" width="8.30" height="8.30" fill="rgb(243,243,243)"/><rect x="365.22" y="287.25" width="8.30" height="8.30" fill="rgb(252,252,252)"/><rect x="426.41" y="287.25" width="8.30" height="8.30" fill="rgb(239,239,239)"/><rect x="434.41" y="287.25" width="8.30" height="8.30" fill="rgb(237,237,237)"/><rect x="442.41" y="287.25" width="8.30" height="8.30" fill="rgb(242,242,242)"/><rect x="450.41" y="287.25" width="8.30" height="8.30" fill="rgb(242,242,242)"/><rect x="458.41" y="287.25" width="8.30" height="8.30" fill="rgb(241,241,241)"/><rect x="466.41" y="287.25" width="8.30" height="8.30" fill="rgb(252,252,252)"/><rect x="269.22" y="295.25" width="8.30" height="8.30" fill="rgb(193,193,193)"/><rect x="277.22" y="295.25" width="8.30" height="8.30" fill="rgb(190,190,190)"/><rect x="285.22" y="295.25" width="8.30" height="8.30" fill="rgb(190,190,190)"/><rect x="293.22" y="295.25" width="8.30" height="8.30" fill="rgb(203,203,203)"/><rect x="301.22" y="295.25" width="8.30" height="8.30" fill="rgb(187,187,187)"/><rect x="309.22" y="295.25" width="8.30" height="8.30" fill="rgb(195,195,195)"/><rect x="317.22" y="295.25" width="8.30" height="8.30" fill="rgb(208,208,208)"/><rect x="325.22" y="295.25" width="8.30" height="8.30" fill="rgb(247,247,247)"/><rect x="333.22" y="295.25" width="8.30" height="8.30" fill="rgb(188,188,188)"/><rect x="341.22" y="295.25" width="8.30" height="8.30" fill="rgb(199,199,199)"/><rect x="349.22" y="295.25" width="8.30" height="8.30" fill="rgb(194,194,194)"/><rect x="357.22" y="295.25" width="8.30" height="8.30" fill="rgb(202,202,202)"/><rect x="365.22" y="295.25" width="8.30" height="8.30" fill="rgb(241,241,241)"/><rect x="426.41" y="295.25" width="8.30" height="8.30" fill="rgb(196,196,196)"/><rect x="434.41" y="295.25" width="8.30" height="8.30" fill="rgb(191,191,191)"/><rect x="442.41" y="295.25" width="8.30" height="8.30" fill="rgb(191,191,191)"/><rect x="450.41" y="295.25" width="8.30" height="8.30" fill="rgb(197,197,197)"/><rect x="458.41" y="295.25" width="8.30" height="8.30" fill="rgb(196,196,196)"/><rect x="466.41" y="295.25" width="8.30" height="8.30" fill="rgb(242,242,242)"/><rect x="269.22" y="303.25" width="8.30" height="8.30" fill="rgb(246,246,246)"/><rect x="277.22" y="303.25" width="8.30" height="8.30" fill="rgb(246,246,246)"/><rect x="285.22" y="303.25" width="8.30" height="8.30" fill="rgb(244,244,244)"/><rect x="293.22" y="303.25" width="8.30" height="8.30" fill="rgb(243,243,243)"/><rect x="301.22" y="303.25" width="8.30" height="8.30" fill="rgb(242,242,242)"/><rect x="309.22" y="303.25" width="8.30" height="8.30" fill="rgb(250,250,250)"/><rect x="317.22" y="303.25" width="8.30" height="8.30" fill="rgb(246,246,246)"/><rect x="325.22" y="303.25" width="8.30" height="8.30" fill="rgb(253,253,253)"/><rect x="333.22" y="303.25" width="8.30" height="8.30" fill="rgb(251,251,251)"/><rect x="341.22" y="303.25" width="8.30" height="8.30" fill="rgb(244,244,244)"/><rect x="349.22" y="303.25" width="8.30" height="8.30" fill="rgb(244,244,244)"/><rect x="357.22" y="303.25" width="8.30" height="8.30" fill="rgb(247,247,247)"/><rect x="365.22" y="303.25" width="8.30" height="8.30" fill="rgb(253,253,253)"/><rect x="426.41" y="303.25" width="8.30" height="8.30" fill="rgb(244,244,244)"/><rect x="434.41" y="303.25" width="8.30" height="8.30" fill="rgb(245,245,245)"/><rect x="442.41" y="303.25" width="8.30" height="8.30" fill="rgb(251,251,251)"/><rect x="450.41" y="303.25" width="8.30" height="8.30" fill="rgb(250,250,250)"/><rect x="458.41" y="303.25" width="8.30" height="8.30" fill="rgb(250,250,250)"/><rect x="466.41" y="303.25" width="8.30" height="8.30" fill="rgb(253,253,253)"/><rect x="269.22" y="311.25" width="8.30" height="8.30" fill="rgb(253,253,253)"/><rect x="277.22" y="311.25" width="8.30" height="8.30" fill="rgb(253,253,253)"/><rect x="285.22" y="311.25" width="8.30" height="8.30" fill="rgb(253,253,253)"/><rect x="293.22" y="311.25" width="8.30" height="8.30" fill="rgb(253,253,253)"/><rect x="301.22" y="311.25" width="8.30" height="8.30" fill="rgb(253,253,253)"/><rect x="309.22" y="311.25" width="8.30" height="8.30" fill="rgb(250,250,250)"/><rect x="317.22" y="311.25" width="8.30" height="8.30" fill="rgb(253,253,253)"/><rect x="325.22" y="311.25" width="8.30" height="8.30" fill="rgb(253,253,253)"/><rect x="333.22" y="311.25" width="8.30" height="8.30" fill="rgb(253,253,253)"/><rect x="341.22" y="311.25" width="8.30" height="8.30" fill="rgb(253,253,253)"/><rect x="349.22" y="311.25" width="8.30" height="8.30" fill="rgb(253,253,253)"/><rect x="357.22" y="311.25" width="8.30" height="8.30" fill="rgb(252,252,252)"/><rect x="365.22" y="311.25" width="8.30" height="8.30" fill="rgb(253,253,253)"/><rect x="426.41" y="311.25" width="8.30" height="8.30" fill="rgb(250,250,250)"/><rect x="434.41" y="311.25" width="8.30" height="8.30" fill="rgb(253,253,253)"/><rect x="442.41" y="311.25" width="8.30" height="8.30" fill="rgb(251,251,251)"/><rect x="450.41" y="311.25" width="8.30" height="8.30" fill="rgb(253,253,253)"/><rect x="458.41" y="311.25" width="8.30" height="8.30" fill="rgb(253,253,253)"/><rect x="466.41" y="311.25" width="8.30" height="8.30" fill="rgb(253,253,253)"/><rect x="269.22" y="319.25" width="8.30" height="8.30" fill="rgb(198,198,198)"/><rect x="277.22" y="319.25" width="8.30" height="8.30" fill="rgb(198,198,198)"/><rect x="285.22" y="319.25" width="8.30" height="8.30" fill="rgb(200,200,200)"/><rect x="293.22" y="319.25" width="8.30" height="8.30" fill="rgb(200,200,200)"/><rect x="301.22" y="319.25" width="8.30" height="8.30" fill="rgb(197,197,197)"/><rect x="309.22" y="319.25" width="8.30" height="8.30" fill="rgb(193,193,193)"/><rect x="317.22" y="319.25" width="8.30" height="8.30" fill="rgb(208,208,208)"/><rect x="325.22" y="319.25" width="8.30" height="8.30" fill="rgb(247,247,247)"/><rect x="333.22" y="319.25" width="8.30" height="8.30" fill="rgb(194,194,194)"/><rect x="341.22" y="319.25" width="8.30" height="8.30" fill="rgb(195,195,195)"/><rect x="349.22" y="319.25" width="8.30" height="8.30" fill="rgb(192,192,192)"/><rect x="357.22" y="319.25" width="8.30" height="8.30" fill="rgb(198,198,198)"/><rect x="365.22" y="319.25" width="8.30" height="8.30" fill="rgb(241,241,241)"/><rect x="426.41" y="319.25" width="8.30" height="8.30" fill="rgb(205,205,205)"/><rect x="434.41" y="319.25" width="8.30" height="8.30" fill="rgb(195,195,195)"/><rect x="442.41" y="319.25" width="8.30" height="8.30" fill="rgb(192,192,192)"/><rect x="450.41" y="319.25" width="8.30" height="8.30" fill="rgb(199,199,199)"/><rect x="458.41" y="319.25" width="8.30" height="8.30" fill="rgb(203,203,203)"/><rect x="466.41" y="319.25" width="8.30" height="8.30" fill="rgb(243,243,243)"/><rect x="269.22" y="327.25" width="8.30" height="8.30" fill="rgb(232,232,232)"/><rect x="277.22" y="327.25" width="8.30" height="8.30" fill="rgb(227,227,227)"/><rect x="285.22" y="327.25" width="8.30" height="8.30" fill="rgb(228,228,228)"/><rect x="293.22" y="327.25" width="8.30" height="8.30" fill="rgb(230,230,230)"/><rect x="301.22" y="327.25" width="8.30" height="8.30" fill="rgb(229,229,229)"/><rect x="309.22" y="327.25" width="8.30" height="8.30" fill="rgb(227,227,227)"/><rect x="317.22" y="327.25" width="8.30" height="8.30" fill="rgb(233,233,233)"/><rect x="325.22" y="327.25" width="8.30" height="8.30" fill="rgb(252,252,252)"/><rect x="333.22" y="327.25" width="8.30" height="8.30" fill="rgb(228,228,228)"/><rect x="341.22" y="327.25" width="8.30" height="8.30" fill="rgb(233,233,233)"/><rect x="349.22" y="327.25" width="8.30" height="8.30" fill="rgb(235,235,235)"/><rect x="357.22" y="327.25" width="8.30" height="8.30" fill="rgb(236,236,236)"/><rect x="365.22" y="327.25" width="8.30" height="8.30" fill="rgb(249,249,249)"/><rect x="426.41" y="327.25" width="8.30" height="8.30" fill="rgb(232,232,232)"/><rect x="434.41" y="327.25" width="8.30" height="8.30" fill="rgb(230,230,230)"/><rect x="442.41" y="327.25" width="8.30" height="8.30" fill="rgb(231,231,231)"/><rect x="450.41" y="327.25" width="8.30" height="8.30" fill="rgb(230,230,230)"/><rect x="458.41" y="327.25" width="8.30" height="8.30" fill="rgb(230,230,230)"/><rect x="466.41" y="327.25" width="8.30" height="8.30" fill="rgb(250,250,250)"/><rect x="269.22" y="335.25" width="8.30" height="8.30" fill="rgb(250,250,250)"/><rect x="277.22" y="335.25" width="8.30" height="8.30" fill="rgb(252,252,252)"/><rect x="285.22" y="335.25" width="8.30" height="8.30" fill="rgb(253,253,253)"/><rect x="293.22" y="335.25" width="8.30" height="8.30" fill="rgb(251,251,251)"/><rect x="301.22" y="335.25" width="8.30" height="8.30" fill="rgb(253,253,253)"/><rect x="309.22" y="335.25" width="8.30" height="8.30" fill="rgb(253,253,253)"/><rect x="317.22" y="335.25" width="8.30" height="8.30" fill="rgb(253,253,253)"/><rect x="325.22" y="335.25" width="8.30" height="8.30" fill="rgb(253,253,253)"/><rect x="333.22" y="335.25" width="8.30" height="8.30" fill="rgb(252,252,252)"/><rect x="341.22" y="335.25" width="8.30" height="8.30" fill="rgb(252,252,252)"/><rect x="349.22" y="335.25" width="8.30" height="8.30" fill="rgb(252,252,252)"/><rect x="357.22" y="335.25" width="8.30" height="8.30" fill="rgb(253,253,253)"/><rect x="365.22" y="335.25" width="8.30" height="8.30" fill="rgb(253,253,253)"/><rect x="426.41" y="335.25" width="8.30" height="8.30" fill="rgb(253,253,253)"/><rect x="434.41" y="335.25" width="8.30" height="8.30" fill="rgb(253,253,253)"/><rect x="442.41" y="335.25" width="8.30" height="8.30" fill="rgb(253,253,253)"/><rect x="450.41" y="335.25" width="8.30" height="8.30" fill="rgb(253,253,253)"/><rect x="458.41" y="335.25" width="8.30" height="8.30" fill="rgb(250,250,250)"/><rect x="466.41" y="335.25" width="8.30" height="8.30" fill="rgb(253,253,253)"/><rect x="269.22" y="343.25" width="8.30" height="8.30" fill="rgb(210,210,210)"/><rect x="277.22" y="343.25" width="8.30" height="8.30" fill="rgb(213,213,213)"/><rect x="285.22" y="343.25" width="8.30" height="8.30" fill="rgb(215,215,215)"/><rect x="293.22" y="343.25" width="8.30" height="8.30" fill="rgb(216,216,216)"/><rect x="301.22" y="343.25" width="8.30" height="8.30" fill="rgb(212,212,212)"/><rect x="309.22" y="343.25" width="8.30" height="8.30" fill="rgb(206,206,206)"/><rect x="317.22" y="343.25" width="8.30" height="8.30" fill="rgb(218,218,218)"/><rect x="325.22" y="343.25" width="8.30" height="8.30" fill="rgb(249,249,249)"/><rect x="333.22" y="343.25" width="8.30" height="8.30" fill="rgb(215,215,215)"/><rect x="341.22" y="343.25" width="8.30" height="8.30" fill="rgb(216,216,216)"/><rect x="349.22" y="343.25" width="8.30" height="8.30" fill="rgb(214,214,214)"/><rect x="357.22" y="343.25" width="8.30" height="8.30" fill="rgb(220,220,220)"/><rect x="365.22" y="343.25" width="8.30" height="8.30" fill="rgb(245,245,245)"/><rect x="426.41" y="343.25" width="8.30" height="8.30" fill="rgb(213,213,213)"/><rect x="434.41" y="343.25" width="8.30" height="8.30" fill="rgb(207,207,207)"/><rect x="442.41" y="343.25" width="8.30" height="8.30" fill="rgb(207,207,207)"/><rect x="450.41" y="343.25" width="8.30" height="8.30" fill="rgb(211,211,211)"/><rect x="458.41" y="343.25" width="8.30" height="8.30" fill="rgb(215,215,215)"/><rect x="466.41" y="343.25" width="8.30" height="8.30" fill="rgb(246,246,246)"/><rect x="269.22" y="351.25" width="8.30" height="8.30" fill="rgb(223,223,223)"/><rect x="277.22" y="351.25" width="8.30" height="8.30" fill="rgb(217,217,217)"/><rect x="285.22" y="351.25" width="8.30" height="8.30" fill="rgb(217,217,217)"/><rect x="293.22" y="351.25" width="8.30" height="8.30" fill="rgb(223,223,223)"/><rect x="301.22" y="351.25" width="8.30" height="8.30" fill="rgb(215,215,215)"/><rect x="309.22" y="351.25" width="8.30" height="8.30" fill="rgb(216,216,216)"/><rect x="317.22" y="351.25" width="8.30" height="8.30" fill="rgb(218,218,218)"/><rect x="325.22" y="351.25" width="8.30" height="8.30" fill="rgb(250,250,250)"/><rect x="333.22" y="351.25" width="8.30" height="8.30" fill="rgb(218,218,218)"/><rect x="341.22" y="351.25" width="8.30" height="8.30" fill="rgb(214,214,214)"/><rect x="349.22" y="351.25" width="8.30" height="8.30" fill="rgb(219,219,219)"/><rect x="357.22" y="351.25" width="8.30" height="8.30" fill="rgb(221,221,221)"/><rect x="365.22" y="351.25" width="8.30" height="8.30" fill="rgb(246,246,246)"/><rect x="426.41" y="351.25" width="8.30" height="8.30" fill="rgb(217,217,217)"/><rect x="434.41" y="351.25" width="8.30" height="8.30" fill="rgb(211,211,211)"/><rect x="442.41" y="351.25" width="8.30" height="8.30" fill="rgb(213,213,213)"/><rect x="450.41" y="351.25" width="8.30" height="8.30" fill="rgb(217,217,217)"/><rect x="458.41" y="351.25" width="8.30" height="8.30" fill="rgb(219,219,219)"/><rect x="466.41" y="351.25" width="8.30" height="8.30" fill="rgb(247,247,247)"/><rect x="269.22" y="359.25" width="8.30" height="8.30" fill="rgb(251,251,251)"/><rect x="277.22" y="359.25" width="8.30" height="8.30" fill="rgb(250,250,250)"/><rect x="285.22" y="359.25" width="8.30" height="8.30" fill="rgb(253,253,253)"/><rect x="293.22" y="359.25" width="8.30" height="8.30" fill="rgb(253,253,253)"/><rect x="301.22" y="359.25" width="8.30" height="8.30" fill="rgb(253,253,253)"/><rect x="309.22" y="359.25" width="8.30" height="8.30" fill="rgb(252,252,252)"/><rect x="317.22" y="359.25" width="8.30" height="8.30" fill="rgb(253,253,253)"/><rect x="325.22" y="359.25" width="8.30" height="8.30" fill="rgb(253,253,253)"/><rect x="333.22" y="359.25" width="8.30" height="8.30" fill="rgb(250,250,250)"/><rect x="341.22" y="359.25" width="8.30" height="8.30" fill="rgb(253,253,253)"/><rect x="349.22" y="359.25" width="8.30" height="8.30" fill="rgb(253,253,253)"/><rect x="357.22" y="359.25" width="8.30" height="8.30" fill="rgb(253,253,253)"/><rect x="365.22" y="359.25" width="8.30" height="8.30" fill="rgb(253,253,253)"/><rect x="426.41" y="359.25" width="8.30" height="8.30" fill="rgb(253,253,253)"/><rect x="434.41" y="359.25" width="8.30" height="8.30" fill="rgb(253,253,253)"/><rect x="442.41" y="359.25" width="8.30" height="8.30" fill="rgb(253,253,253)"/><rect x="450.41" y="359.25" width="8.30" height="8.30" fill="rgb(252,252,252)"/><rect x="458.41" y="359.25" width="8.30" height="8.30" fill="rgb(252,252,252)"/><rect x="466.41" y="359.25" width="8.30" height="8.30" fill="rgb(253,253,253)"/><rect x="269.22" y="367.25" width="8.30" height="8.30" fill="rgb(233,233,233)"/><rect x="277.22" y="367.25" width="8.30" height="8.30" fill="rgb(228,228,228)"/><rect x="285.22" y="367.25" width="8.30" height="8.30" fill="rgb(225,225,225)"/><rect x="293.22" y="367.25" width="8.30" height="8.30" fill="rgb(225,225,225)"/><rect x="301.22" y="367.25" width="8.30" height="8.30" fill="rgb(226,226,226)"/><rect x="309.22" y="367.25" width="8.30" height="8.30" fill="rgb(228,228,228)"/><rect x="317.22" y="367.25" width="8.30" height="8.30" fill="rgb(231,231,231)"/><rect x="325.22" y="367.25" width="8.30" height="8.30" fill="rgb(251,251,251)"/><rect x="333.22" y="367.25" width="8.30" height="8.30" fill="rgb(224,224,224)"/><rect x="341.22" y="367.25" width="8.30" height="8.30" fill="rgb(230,230,230)"/><rect x="349.22" y="367.25" width="8.30" height="8.30" fill="rgb(231,231,231)"/><rect x="357.22" y="367.25" width="8.30" height="8.30" fill="rgb(227,227,227)"/><rect x="365.22" y="367.25" width="8.30" height="8.30" fill="rgb(248,248,248)"/><rect x="426.41" y="367.25" width="8.30" height="8.30" fill="rgb(225,225,225)"/><rect x="434.41" y="367.25" width="8.30" height="8.30" fill="rgb(225,225,225)"/><rect x="442.41" y="367.25" width="8.30" height="8.30" fill="rgb(226,226,226)"/><rect x="450.41" y="367.25" width="8.30" height="8.30" fill="rgb(228,228,228)"/><rect x="458.41" y="367.25" width="8.30" height="8.30" fill="rgb(225,225,225)"/><rect x="466.41" y="367.25" width="8.30" height="8.30" fill="rgb(249,249,249)"/><rect x="269.22" y="375.25" width="8.30" height="8.30" fill="rgb(207,207,207)"/><rect x="277.22" y="375.25" width="8.30" height="8.30" fill="rgb(202,202,202)"/><rect x="285.22" y="375.25" width="8.30" height="8.30" fill="rgb(200,200,200)"/><rect x="293.22" y="375.25" width="8.30" height="8.30" fill="rgb(203,203,203)"/><rect x="301.22" y="375.25" width="8.30" height="8.30" fill="rgb(204,204,204)"/><rect x="309.22" y="375.25" width="8.30" height="8.30" fill="rgb(198,198,198)"/><rect x="317.22" y="375.25" width="8.30" height="8.30" fill="rgb(214,214,214)"/><rect x="325.22" y="375.25" width="8.30" height="8.30" fill="rgb(248,248,248)"/><rect x="333.22" y="375.25" width="8.30" height="8.30" fill="rgb(197,197,197)"/><rect x="341.22" y="375.25" width="8.30" height="8.30" fill="rgb(200,200,200)"/><rect x="349.22" y="375.25" width="8.30" height="8.30" fill="rgb(202,202,202)"/><rect x="357.22" y="375.25" width="8.30" height="8.30" fill="rgb(203,203,203)"/><rect x="365.22" y="375.25" width="8.30" height="8.30" fill="rgb(242,242,242)"/><rect x="426.41" y="375.25" width="8.30" height="8.30" fill="rgb(210,210,210)"/><rect x="434.41" y="375.25" width="8.30" height="8.30" fill="rgb(200,200,200)"/><rect x="442.41" y="375.25" width="8.30" height="8.30" fill="rgb(196,196,196)"/><rect x="450.41" y="375.25" width="8.30" height="8.30" fill="rgb(197,197,197)"/><rect x="458.41" y="375.25" width="8.30" height="8.30" fill="rgb(202,202,202)"/><rect x="466.41" y="375.25" width="8.30" height="8.30" fill="rgb(244,244,244)"/><rect x="269.22" y="383.25" width="8.30" height="8.30" fill="rgb(253,253,253)"/><rect x="277.22" y="383.25" width="8.30" height="8.30" fill="rgb(253,253,253)"/><rect x="285.22" y="383.25" width="8.30" height="8.30" fill="rgb(251,251,251)"/><rect x="293.22" y="383.25" width="8.30" height="8.30" fill="rgb(253,253,253)"/><rect x="301.22" y="383.25" width="8.30" height="8.30" fill="rgb(252,252,252)"/><rect x="309.22" y="383.25" width="8.30" height="8.30" fill="rgb(253,253,253)"/><rect x="317.22" y="383.25" width="8.30" height="8.30" fill="rgb(251,251,251)"/><rect x="325.22" y="383.25" width="8.30" height="8.30" fill="rgb(253,253,253)"/><rect x="333.22" y="383.25" width="8.30" height="8.30" fill="rgb(250,250,250)"/><rect x="341.22" y="383.25" width="8.30" height="8.30" fill="rgb(250,250,250)"/><rect x="349.22" y="383.25" width="8.30" height="8.30" fill="rgb(253,253,253)"/><rect x="357.22" y="383.25" width="8.30" height="8.30" fill="rgb(253,253,253)"/><rect x="365.22" y="383.25" width="8.30" height="8.30" fill="rgb(253,253,253)"/><rect x="426.41" y="383.25" width="8.30" height="8.30" fill="rgb(253,253,253)"/><rect x="434.41" y="383.25" width="8.30" height="8.30" fill="rgb(253,253,253)"/><rect x="442.41" y="383.25" width="8.30" height="8.30" fill="rgb(253,253,253)"/><rect x="450.41" y="383.25" width="8.30" height="8.30" fill="rgb(253,253,253)"/><rect x="458.41" y="383.25" width="8.30" height="8.30" fill="rgb(253,253,253)"/><rect x="466.41" y="383.25" width="8.30" height="8.30" fill="rgb(253,253,253)"/><rect x="269.22" y="391.25" width="8.30" height="8.30" fill="rgb(240,240,240)"/><rect x="277.22" y="391.25" width="8.30" height="8.30" fill="rgb(246,246,246)"/><rect x="285.22" y="391.25" width="8.30" height="8.30" fill="rgb(245,245,245)"/><rect x="293.22" y="391.25" width="8.30" height="8.30" fill="rgb(239,239,239)"/><rect x="301.22" y="391.25" width="8.30" height="8.30" fill="rgb(244,244,244)"/><rect x="309.22" y="391.25" width="8.30" height="8.30" fill="rgb(241,241,241)"/><rect x="317.22" y="391.25" width="8.30" height="8.30" fill="rgb(243,243,243)"/><rect x="325.22" y="391.25" width="8.30" height="8.30" fill="rgb(253,253,253)"/><rect x="333.22" y="391.25" width="8.30" height="8.30" fill="rgb(240,240,240)"/><rect x="341.22" y="391.25" width="8.30" height="8.30" fill="rgb(239,239,239)"/><rect x="349.22" y="391.25" width="8.30" height="8.30" fill="rgb(237,237,237)"/><rect x="357.22" y="391.25" width="8.30" height="8.30" fill="rgb(241,241,241)"/><rect x="365.22" y="391.25" width="8.30" height="8.30" fill="rgb(252,252,252)"/><rect x="426.41" y="391.25" width="8.30" height="8.30" fill="rgb(242,242,242)"/><rect x="434.41" y="391.25" width="8.30" height="8.30" fill="rgb(247,247,247)"/><rect x="442.41" y="391.25" width="8.30" height="8.30" fill="rgb(238,238,238)"/><rect x="450.41" y="391.25" width="8.30" height="8.30" fill="rgb(247,247,247)"/><rect x="458.41" y="391.25" width="8.30" height="8.30" fill="rgb(240,240,240)"/><rect x="466.41" y="391.25" width="8.30" height="8.30" fill="rgb(252,252,252)"/><rect x="269.22" y="399.25" width="8.30" height="8.30" fill="rgb(196,196,196)"/><rect x="277.22" y="399.25" width="8.30" height="8.30" fill="rgb(195,195,195)"/><rect x="285.22" y="399.25" width="8.30" height="8.30" fill="rgb(195,195,195)"/><rect x="293.22" y="399.25" width="8.30" height="8.30" fill="rgb(199,199,199)"/><rect x="301.22" y="399.25" width="8.30" height="8.30" fill="rgb(188,188,188)"/><rect x="309.22" y="399.25" width="8.30" height="8.30" fill="rgb(192,192,192)"/><rect x="317.22" y="399.25" width="8.30" height="8.30" fill="rgb(203,203,203)"/><rect x="325.22" y="399.25" width="8.30" height="8.30" fill="rgb(247,247,247)"/><rect x="333.22" y="399.25" width="8.30" height="8.30" fill="rgb(196,196,196)"/><rect x="341.22" y="399.25" width="8.30" height="8.30" fill="rgb(192,192,192)"/><rect x="349.22" y="399.25" width="8.30" height="8.30" fill="rgb(191,191,191)"/><rect x="357.22" y="399.25" width="8.30" height="8.30" fill="rgb(202,202,202)"/><rect x="365.22" y="399.25" width="8.30" height="8.30" fill="rgb(241,241,241)"/><rect x="426.41" y="399.25" width="8.30" height="8.30" fill="rgb(194,194,194)"/><rect x="434.41" y="399.25" width="8.30" height="8.30" fill="rgb(191,191,191)"/><rect x="442.41" y="399.25" width="8.30" height="8.30" fill="rgb(195,195,195)"/><rect x="450.41" y="399.25" width="8.30" height="8.30" fill="rgb(195,195,195)"/><rect x="458.41" y="399.25" width="8.30" height="8.30" fill="rgb(191,191,191)"/><rect x="466.41" y="399.25" width="8.30" height="8.30" fill="rgb(242,242,242)"/><rect x="269.22" y="407.25" width="8.30" height="8.30" fill="rgb(242,242,242)"/><rect x="277.22" y="407.25" width="8.30" height="8.30" fill="rgb(242,242,242)"/><rect x="285.22" y="407.25" width="8.30" height="8.30" fill="rgb(251,251,251)"/><rect x="293.22" y="407.25" width="8.30" height="8.30" fill="rgb(245,245,245)"/><rect x="301.22" y="407.25" width="8.30" height="8.30" fill="rgb(249,249,249)"/><rect x="309.22" y="407.25" width="8.30" height="8.30" fill="rgb(250,250,250)"/><rect x="317.22" y="407.25" width="8.30" height="8.30" fill="rgb(246,246,246)"/><rect x="325.22" y="407.25" width="8.30" height="8.30" fill="rgb(253,253,253)"/><rect x="333.22" y="407.25" width="8.30" height="8.30" fill="rgb(244,244,244)"/><rect x="341.22" y="407.25" width="8.30" height="8.30" fill="rgb(251,251,251)"/><rect x="349.22" y="407.25" width="8.30" height="8.30" fill="rgb(248,248,248)"/><rect x="357.22" y="407.25" width="8.30" height="8.30" fill="rgb(245,245,245)"/><rect x="365.22" y="407.25" width="8.30" height="8.30" fill="rgb(253,253,253)"/><rect x="426.41" y="407.25" width="8.30" height="8.30" fill="rgb(249,249,249)"/><rect x="434.41" y="407.25" width="8.30" height="8.30" fill="rgb(245,245,245)"/><rect x="442.41" y="407.25" width="8.30" height="8.30" fill="rgb(244,244,244)"/><rect x="450.41" y="407.25" width="8.30" height="8.30" fill="rgb(241,241,241)"/><rect x="458.41" y="407.25" width="8.30" height="8.30" fill="rgb(249,249,249)"/><rect x="466.41" y="407.25" width="8.30" height="8.30" fill="rgb(253,253,253)"/><rect x="269.22" y="415.25" width="8.30" height="8.30" fill="rgb(253,253,253)"/><rect x="277.22" y="415.25" width="8.30" height="8.30" fill="rgb(253,253,253)"/><rect x="285.22" y="415.25" width="8.30" height="8.30" fill="rgb(253,253,253)"/><rect x="293.22" y="415.25" width="8.30" height="8.30" fill="rgb(250,250,250)"/><rect x="301.22" y="415.25" width="8.30" height="8.30" fill="rgb(252,252,252)"/><rect x="309.22" y="415.25" width="8.30" height="8.30" fill="rgb(253,253,253)"/><rect x="317.22" y="415.25" width="8.30" height="8.30" fill="rgb(253,253,253)"/><rect x="325.22" y="415.25" width="8.30" height="8.30" fill="rgb(253,253,253)"/><rect x="333.22" y="415.25" width="8.30" height="8.30" fill="rgb(253,253,253)"/><rect x="341.22" y="415.25" width="8.30" height="8.30" fill="rgb(253,253,253)"/><rect x="349.22" y="415.25" width="8.30" height="8.30" fill="rgb(252,252,252)"/><rect x="357.22" y="415.25" width="8.30" height="8.30" fill="rgb(253,253,253)"/><rect x="365.22" y="415.25" width="8.30" height="8.30" fill="rgb(253,253,253)"/><rect x="426.41" y="415.25" width="8.30" height="8.30" fill="rgb(253,253,253)"/><rect x="434.41" y="415.25" width="8.30" height="8.30" fill="rgb(253,253,253)"/><rect x="442.41" y="415.25" width="8.30" height="8.30" fill="rgb(251,251,251)"/><rect x="450.41" y="415.25" width="8.30" height="8.30" fill="rgb(253,253,253)"/><rect x="458.41" y="415.25" width="8.30" height="8.30" fill="rgb(253,253,253)"/><rect x="466.41" y="415.25" width="8.30" height="8.30" fill="rgb(253,253,253)"/><rect x="269.22" y="423.25" width="8.30" height="8.30" fill="rgb(203,203,203)"/><rect x="277.22" y="423.25" width="8.30" height="8.30" fill="rgb(198,198,198)"/><rect x="285.22" y="423.25" width="8.30" height="8.30" fill="rgb(196,196,196)"/><rect x="293.22" y="423.25" width="8.30" height="8.30" fill="rgb(201,201,201)"/><rect x="301.22" y="423.25" width="8.30" height="8.30" fill="rgb(193,193,193)"/><rect x="309.22" y="423.25" width="8.30" height="8.30" fill="rgb(194,194,194)"/><rect x="317.22" y="423.25" width="8.30" height="8.30" fill="rgb(210,210,210)"/><rect x="325.22" y="423.25" width="8.30" height="8.30" fill="rgb(247,247,247)"/><rect x="333.22" y="423.25" width="8.30" height="8.30" fill="rgb(191,191,191)"/><rect x="341.22" y="423.25" width="8.30" height="8.30" fill="rgb(195,195,195)"/><rect x="349.22" y="423.25" width="8.30" height="8.30" fill="rgb(198,198,198)"/><rect x="357.22" y="423.25" width="8.30" height="8.30" fill="rgb(199,199,199)"/><rect x="365.22" y="423.25" width="8.30" height="8.30" fill="rgb(241,241,241)"/><rect x="426.41" y="423.25" width="8.30" height="8.30" fill="rgb(197,197,197)"/><rect x="434.41" y="423.25" width="8.30" height="8.30" fill="rgb(191,191,191)"/><rect x="442.41" y="423.25" width="8.30" height="8.30" fill="rgb(196,196,196)"/><rect x="450.41" y="423.25" width="8.30" height="8.30" fill="rgb(193,193,193)"/><rect x="458.41" y="423.25" width="8.30" height="8.30" fill="rgb(203,203,203)"/><rect x="466.41" y="423.25" width="8.30" height="8.30" fill="rgb(243,243,243)"/><rect x="269.22" y="431.25" width="8.30" height="8.30" fill="rgb(237,237,237)"/><rect x="277.22" y="431.25" width="8.30" height="8.30" fill="rgb(236,236,236)"/><rect x="285.22" y="431.25" width="8.30" height="8.30" fill="rgb(228,228,228)"/><rect x="293.22" y="431.25" width="8.30" height="8.30" fill="rgb(230,230,230)"/><rect x="301.22" y="431.25" width="8.30" height="8.30" fill="rgb(227,227,227)"/><rect x="309.22" y="431.25" width="8.30" height="8.30" fill="rgb(231,231,231)"/><rect x="317.22" y="431.25" width="8.30" height="8.30" fill="rgb(238,238,238)"/><rect x="325.22" y="431.25" width="8.30" height="8.30" fill="rgb(252,252,252)"/><rect x="333.22" y="431.25" width="8.30" height="8.30" fill="rgb(230,230,230)"/><rect x="341.22" y="431.25" width="8.30" height="8.30" fill="rgb(229,229,229)"/><rect x="349.22" y="431.25" width="8.30" height="8.30" fill="rgb(230,230,230)"/><rect x="357.22" y="431.25" width="8.30" height="8.30" fill="rgb(234,234,234)"/><rect x="365.22" y="431.25" width="8.30" height="8.30" fill="rgb(249,249,249)"/><rect x="426.41" y="431.25" width="8.30" height="8.30" fill="rgb(235,235,235)"/><rect x="434.41" y="431.25" width="8.30" height="8.30" fill="rgb(233,233,233)"/><rect x="442.41" y="431.25" width="8.30" height="8.30" fill="rgb(234,234,234)"/><rect x="450.41" y="431.25" width="8.30" height="8.30" fill="rgb(232,232,232)"/><rect x="458.41" y="431.25" width="8.30" height="8.30" fill="rgb(228,228,228)"/><rect x="466.41" y="431.25" width="8.30" height="8.30" fill="rgb(250,250,250)"/><rect x="269.22" y="439.25" width="8.30" height="8.30" fill="rgb(253,253,253)"/><rect x="277.22" y="439.25" width="8.30" height="8.30" fill="rgb(252,252,252)"/><rect x="285.22" y="439.25" width="8.30" height="8.30" fill="rgb(253,253,253)"/><rect x="293.22" y="439.25" width="8.30" height="8.30" fill="rgb(253,253,253)"/><rect x="301.22" y="439.25" width="8.30" height="8.30" fill="rgb(253,253,253)"/><rect x="309.22" y="439.25" width="8.30" height="8.30" fill="rgb(251,251,251)"/><rect x="317.22" y="439.25" width="8.30" height="8.30" fill="rgb(252,252,252)"/><rect x="325.22" y="439.25" width="8.30" height="8.30" fill="rgb(253,253,253)"/><rect x="333.22" y="439.25" width="8.30" height="8.30" fill="rgb(252,252,252)"/><rect x="341.22" y="439.25" width="8.30" height="8.30" fill="rgb(251,251,251)"/><rect x="349.22" y="439.25" width="8.30" height="8.30" fill="rgb(253,253,253)"/><rect x="357.22" y="439.25" width="8.30" height="8.30" fill="rgb(253,253,253)"/><rect x="365.22" y="439.25" width="8.30" height="8.30" fill="rgb(253,253,253)"/><rect x="426.41" y="439.25" width="8.30" height="8.30" fill="rgb(253,253,253)"/><rect x="434.41" y="439.25" width="8.30" height="8.30" fill="rgb(253,253,253)"/><rect x="442.41" y="439.25" width="8.30" height="8.30" fill="rgb(253,253,253)"/><rect x="450.41" y="439.25" width="8.30" height="8.30" fill="rgb(253,253,253)"/><rect x="458.41" y="439.25" width="8.30" height="8.30" fill="rgb(252,252,252)"/><rect x="466.41" y="439.25" width="8.30" height="8.30" fill="rgb(253,253,253)"/><rect x="269.22" y="447.25" width="8.30" height="8.30" fill="rgb(217,217,217)"/><rect x="277.22" y="447.25" width="8.30" height="8.30" fill="rgb(212,212,212)"/><rect x="285.22" y="447.25" width="8.30" height="8.30" fill="rgb(216,216,216)"/><rect x="293.22" y="447.25" width="8.30" height="8.30" fill="rgb(212,212,212)"/><rect x="301.22" y="447.25" width="8.30" height="8.30" fill="rgb(211,211,211)"/><rect x="309.22" y="447.25" width="8.30" height="8.30" fill="rgb(214,214,214)"/><rect x="317.22" y="447.25" width="8.30" height="8.30" fill="rgb(223,223,223)"/><rect x="325.22" y="447.25" width="8.30" height="8.30" fill="rgb(249,249,249)"/><rect x="333.22" y="447.25" width="8.30" height="8.30" fill="rgb(215,215,215)"/><rect x="341.22" y="447.25" width="8.30" height="8.30" fill="rgb(208,208,208)"/><rect x="349.22" y="447.25" width="8.30" height="8.30" fill="rgb(209,209,209)"/><rect x="357.22" y="447.25" width="8.30" height="8.30" fill="rgb(211,211,211)"/><rect x="365.22" y="447.25" width="8.30" height="8.30" fill="rgb(245,245,245)"/><rect x="426.41" y="447.25" width="8.30" height="8.30" fill="rgb(212,212,212)"/><rect x="434.41" y="447.25" width="8.30" height="8.30" fill="rgb(216,216,216)"/><rect x="442.41" y="447.25" width="8.30" height="8.30" fill="rgb(212,212,212)"/><rect x="450.41" y="447.25" width="8.30" height="8.30" fill="rgb(215,215,215)"/><rect x="458.41" y="447.25" width="8.30" height="8.30" fill="rgb(212,212,212)"/><rect x="466.41" y="447.25" width="8.30" height="8.30" fill="rgb(246,246,246)"/><rect x="269.22" y="455.25" width="8.30" height="8.30" fill="rgb(222,222,222)"/><rect x="277.22" y="455.25" width="8.30" height="8.30" fill="rgb(215,215,215)"/><rect x="285.22" y="455.25" width="8.30" height="8.30" fill="rgb(213,213,213)"/><rect x="293.22" y="455.25" width="8.30" height="8.30" fill="rgb(223,223,223)"/><rect x="301.22" y="455.25" width="8.30" height="8.30" fill="rgb(220,220,220)"/><rect x="309.22" y="455.25" width="8.30" height="8.30" fill="rgb(211,211,211)"/><rect x="317.22" y="455.25" width="8.30" height="8.30" fill="rgb(224,224,224)"/><rect x="325.22" y="455.25" width="8.30" height="8.30" fill="rgb(250,250,250)"/><rect x="333.22" y="455.25" width="8.30" height="8.30" fill="rgb(216,216,216)"/><rect x="341.22" y="455.25" width="8.30" height="8.30" fill="rgb(214,214,214)"/><rect x="349.22" y="455.25" width="8.30" height="8.30" fill="rgb(214,214,214)"/><rect x="357.22" y="455.25" width="8.30" height="8.30" fill="rgb(216,216,216)"/><rect x="365.22" y="455.25" width="8.30" height="8.30" fill="rgb(246,246,246)"/><rect x="426.41" y="455.25" width="8.30" height="8.30" fill="rgb(216,216,216)"/><rect x="434.41" y="455.25" width="8.30" height="8.30" fill="rgb(213,213,213)"/><rect x="442.41" y="455.25" width="8.30" height="8.30" fill="rgb(216,216,216)"/><rect x="450.41" y="455.25" width="8.30" height="8.30" fill="rgb(217,217,217)"/><rect x="458.41" y="455.25" width="8.30" height="8.30" fill="rgb(214,214,214)"/><rect x="466.41" y="455.25" width="8.30" height="8.30" fill="rgb(247,247,247)"/><rect x="269.22" y="463.25" width="8.30" height="8.30" fill="rgb(250,250,250)"/><rect x="277.22" y="463.25" width="8.30" height="8.30" fill="rgb(253,253,253)"/><rect x="285.22" y="463.25" width="8.30" height="8.30" fill="rgb(253,253,253)"/><rect x="293.22" y="463.25" width="8.30" height="8.30" fill="rgb(251,251,251)"/><rect x="301.22" y="463.25" width="8.30" height="8.30" fill="rgb(253,253,253)"/><rect x="309.22" y="463.25" width="8.30" height="8.30" fill="rgb(252,252,252)"/><rect x="317.22" y="463.25" width="8.30" height="8.30" fill="rgb(253,253,253)"/><rect x="325.22" y="463.25" width="8.30" height="8.30" fill="rgb(253,253,253)"/><rect x="333.22" y="463.25" width="8.30" height="8.30" fill="rgb(253,253,253)"/><rect x="341.22" y="463.25" width="8.30" height="8.30" fill="rgb(250,250,250)"/><rect x="349.22" y="463.25" width="8.30" height="8.30" fill="rgb(251,251,251)"/><rect x="357.22" y="463.25" width="8.30" height="8.30" fill="rgb(253,253,253)"/><rect x="365.22" y="463.25" width="8.30" height="8.30" fill="rgb(253,253,253)"/><rect x="426.41" y="463.25" width="8.30" height="8.30" fill="rgb(253,253,253)"/><rect x="434.41" y="463.25" width="8.30" height="8.30" fill="rgb(253,253,253)"/><rect x="442.41" y="463.25" width="8.30" height="8.30" fill="rgb(250,250,250)"/><rect x="450.41" y="463.25" width="8.30" height="8.30" fill="rgb(251,251,251)"/><rect x="458.41" y="463.25" width="8.30" height="8.30" fill="rgb(253,253,253)"/><rect x="466.41" y="463.25" width="8.30" height="8.30" fill="rgb(253,253,253)"/><rect x="269.22" y="471.25" width="8.30" height="8.30" fill="rgb(228,228,228)"/><rect x="277.22" y="471.25" width="8.30" height="8.30" fill="rgb(224,224,224)"/><rect x="285.22" y="471.25" width="8.30" height="8.30" fill="rgb(225,225,225)"/><rect x="293.22" y="471.25" width="8.30" height="8.30" fill="rgb(234,234,234)"/><rect x="301.22" y="471.25" width="8.30" height="8.30" fill="rgb(225,225,225)"/><rect x="309.22" y="471.25" width="8.30" height="8.30" fill="rgb(227,227,227)"/><rect x="317.22" y="471.25" width="8.30" height="8.30" fill="rgb(231,231,231)"/><rect x="325.22" y="471.25" width="8.30" height="8.30" fill="rgb(251,251,251)"/><rect x="333.22" y="471.25" width="8.30" height="8.30" fill="rgb(226,226,226)"/><rect x="341.22" y="471.25" width="8.30" height="8.30" fill="rgb(231,231,231)"/><rect x="349.22" y="471.25" width="8.30" height="8.30" fill="rgb(231,231,231)"/><rect x="357.22" y="471.25" width="8.30" height="8.30" fill="rgb(228,228,228)"/><rect x="365.22" y="471.25" width="8.30" height="8.30" fill="rgb(248,248,248)"/><rect x="426.41" y="471.25" width="8.30" height="8.30" fill="rgb(226,226,226)"/><rect x="434.41" y="471.25" width="8.30" height="8.30" fill="rgb(229,229,229)"/><rect x="442.41" y="471.25" width="8.30" height="8.30" fill="rgb(223,223,223)"/><rect x="450.41" y="471.25" width="8.30" height="8.30" fill="rgb(221,221,221)"/><rect x="458.41" y="471.25" width="8.30" height="8.30" fill="rgb(232,232,232)"/><rect x="466.41" y="471.25" width="8.30" height="8.30" fill="rgb(249,249,249)"/><rect x="269.22" y="479.25" width="8.30" height="8.30" fill="rgb(203,203,203)"/><rect x="277.22" y="479.25" width="8.30" height="8.30" fill="rgb(203,203,203)"/><rect x="285.22" y="479.25" width="8.30" height="8.30" fill="rgb(199,199,199)"/><rect x="293.22" y="479.25" width="8.30" height="8.30" fill="rgb(210,210,210)"/><rect x="301.22" y="479.25" width="8.30" height="8.30" fill="rgb(199,199,199)"/><rect x="309.22" y="479.25" width="8.30" height="8.30" fill="rgb(196,196,196)"/><rect x="317.22" y="479.25" width="8.30" height="8.30" fill="rgb(206,206,206)"/><rect x="325.22" y="479.25" width="8.30" height="8.30" fill="rgb(248,248,248)"/><rect x="333.22" y="479.25" width="8.30" height="8.30" fill="rgb(200,200,200)"/><rect x="341.22" y="479.25" width="8.30" height="8.30" fill="rgb(204,204,204)"/><rect x="349.22" y="479.25" width="8.30" height="8.30" fill="rgb(204,204,204)"/><rect x="357.22" y="479.25" width="8.30" height="8.30" fill="rgb(201,201,201)"/><rect x="365.22" y="479.25" width="8.30" height="8.30" fill="rgb(242,242,242)"/><rect x="426.41" y="479.25" width="8.30" height="8.30" fill="rgb(206,206,206)"/><rect x="434.41" y="479.25" width="8.30" height="8.30" fill="rgb(198,198,198)"/><rect x="442.41" y="479.25" width="8.30" height="8.30" fill="rgb(200,200,200)"/><rect x="450.41" y="479.25" width="8.30" height="8.30" fill="rgb(196,196,196)"/><rect x="458.41" y="479.25" width="8.30" height="8.30" fill="rgb(200,200,200)"/><rect x="466.41" y="479.25" width="8.30" height="8.30" fill="rgb(244,244,244)"/><rect x="269.22" y="487.25" width="8.30" height="5.17" fill="rgb(253,253,253)"/><rect x="277.22" y="487.25" width="8.30" height="5.17" fill="rgb(253,253,253)"/><rect x="285.22" y="487.25" width="8.30" height="5.17" fill="rgb(251,251,251)"/><rect x="293.22" y="487.25" width="8.30" height="5.17" fill="rgb(253,253,253)"/><rect x="301.22" y="487.25" width="8.30" height="5.17" fill="rgb(253,253,253)"/><rect x="309.22" y="487.25" width="8.30" height="5.17" fill="rgb(253,253,253)"/><rect x="317.22" y="487.25" width="8.30" height="5.17" fill="rgb(251,251,251)"/><rect x="325.22" y="487.25" width="8.30" height="5.17" fill="rgb(253,253,253)"/><rect x="333.22" y="487.25" width="8.30" height="5.17" fill="rgb(251,251,251)"/><rect x="341.22" y="487.25" width="8.30" height="5.17" fill="rgb(253,253,253)"/><rect x="349.22" y="487.25" width="8.30" height="5.17" fill="rgb(253,253,253)"/><rect x="357.22" y="487.25" width="8.30" height="5.17" fill="rgb(253,253,253)"/><rect x="365.22" y="487.25" width="8.30" height="5.17" fill="rgb(253,253,253)"/><rect x="426.41" y="487.25" width="8.30" height="5.17" fill="rgb(250,250,250)"/><rect x="434.41" y="487.25" width="8.30" height="5.17" fill="rgb(253,253,253)"/><rect x="442.41" y="487.25" width="8.30" height="5.17" fill="rgb(253,253,253)"/><rect x="450.41" y="487.25" width="8.30" height="5.17" fill="rgb(253,253,253)"/><rect x="458.41" y="487.25" width="8.30" height="5.17" fill="rgb(253,253,253)"/><rect x="466.41" y="487.25" width="8.30" height="5.17" fill="rgb(253,253,253)"/></g></svg>
</div>
</div>
<div class="track"></div><div class="pscroll"></div>
</div></body></html>
